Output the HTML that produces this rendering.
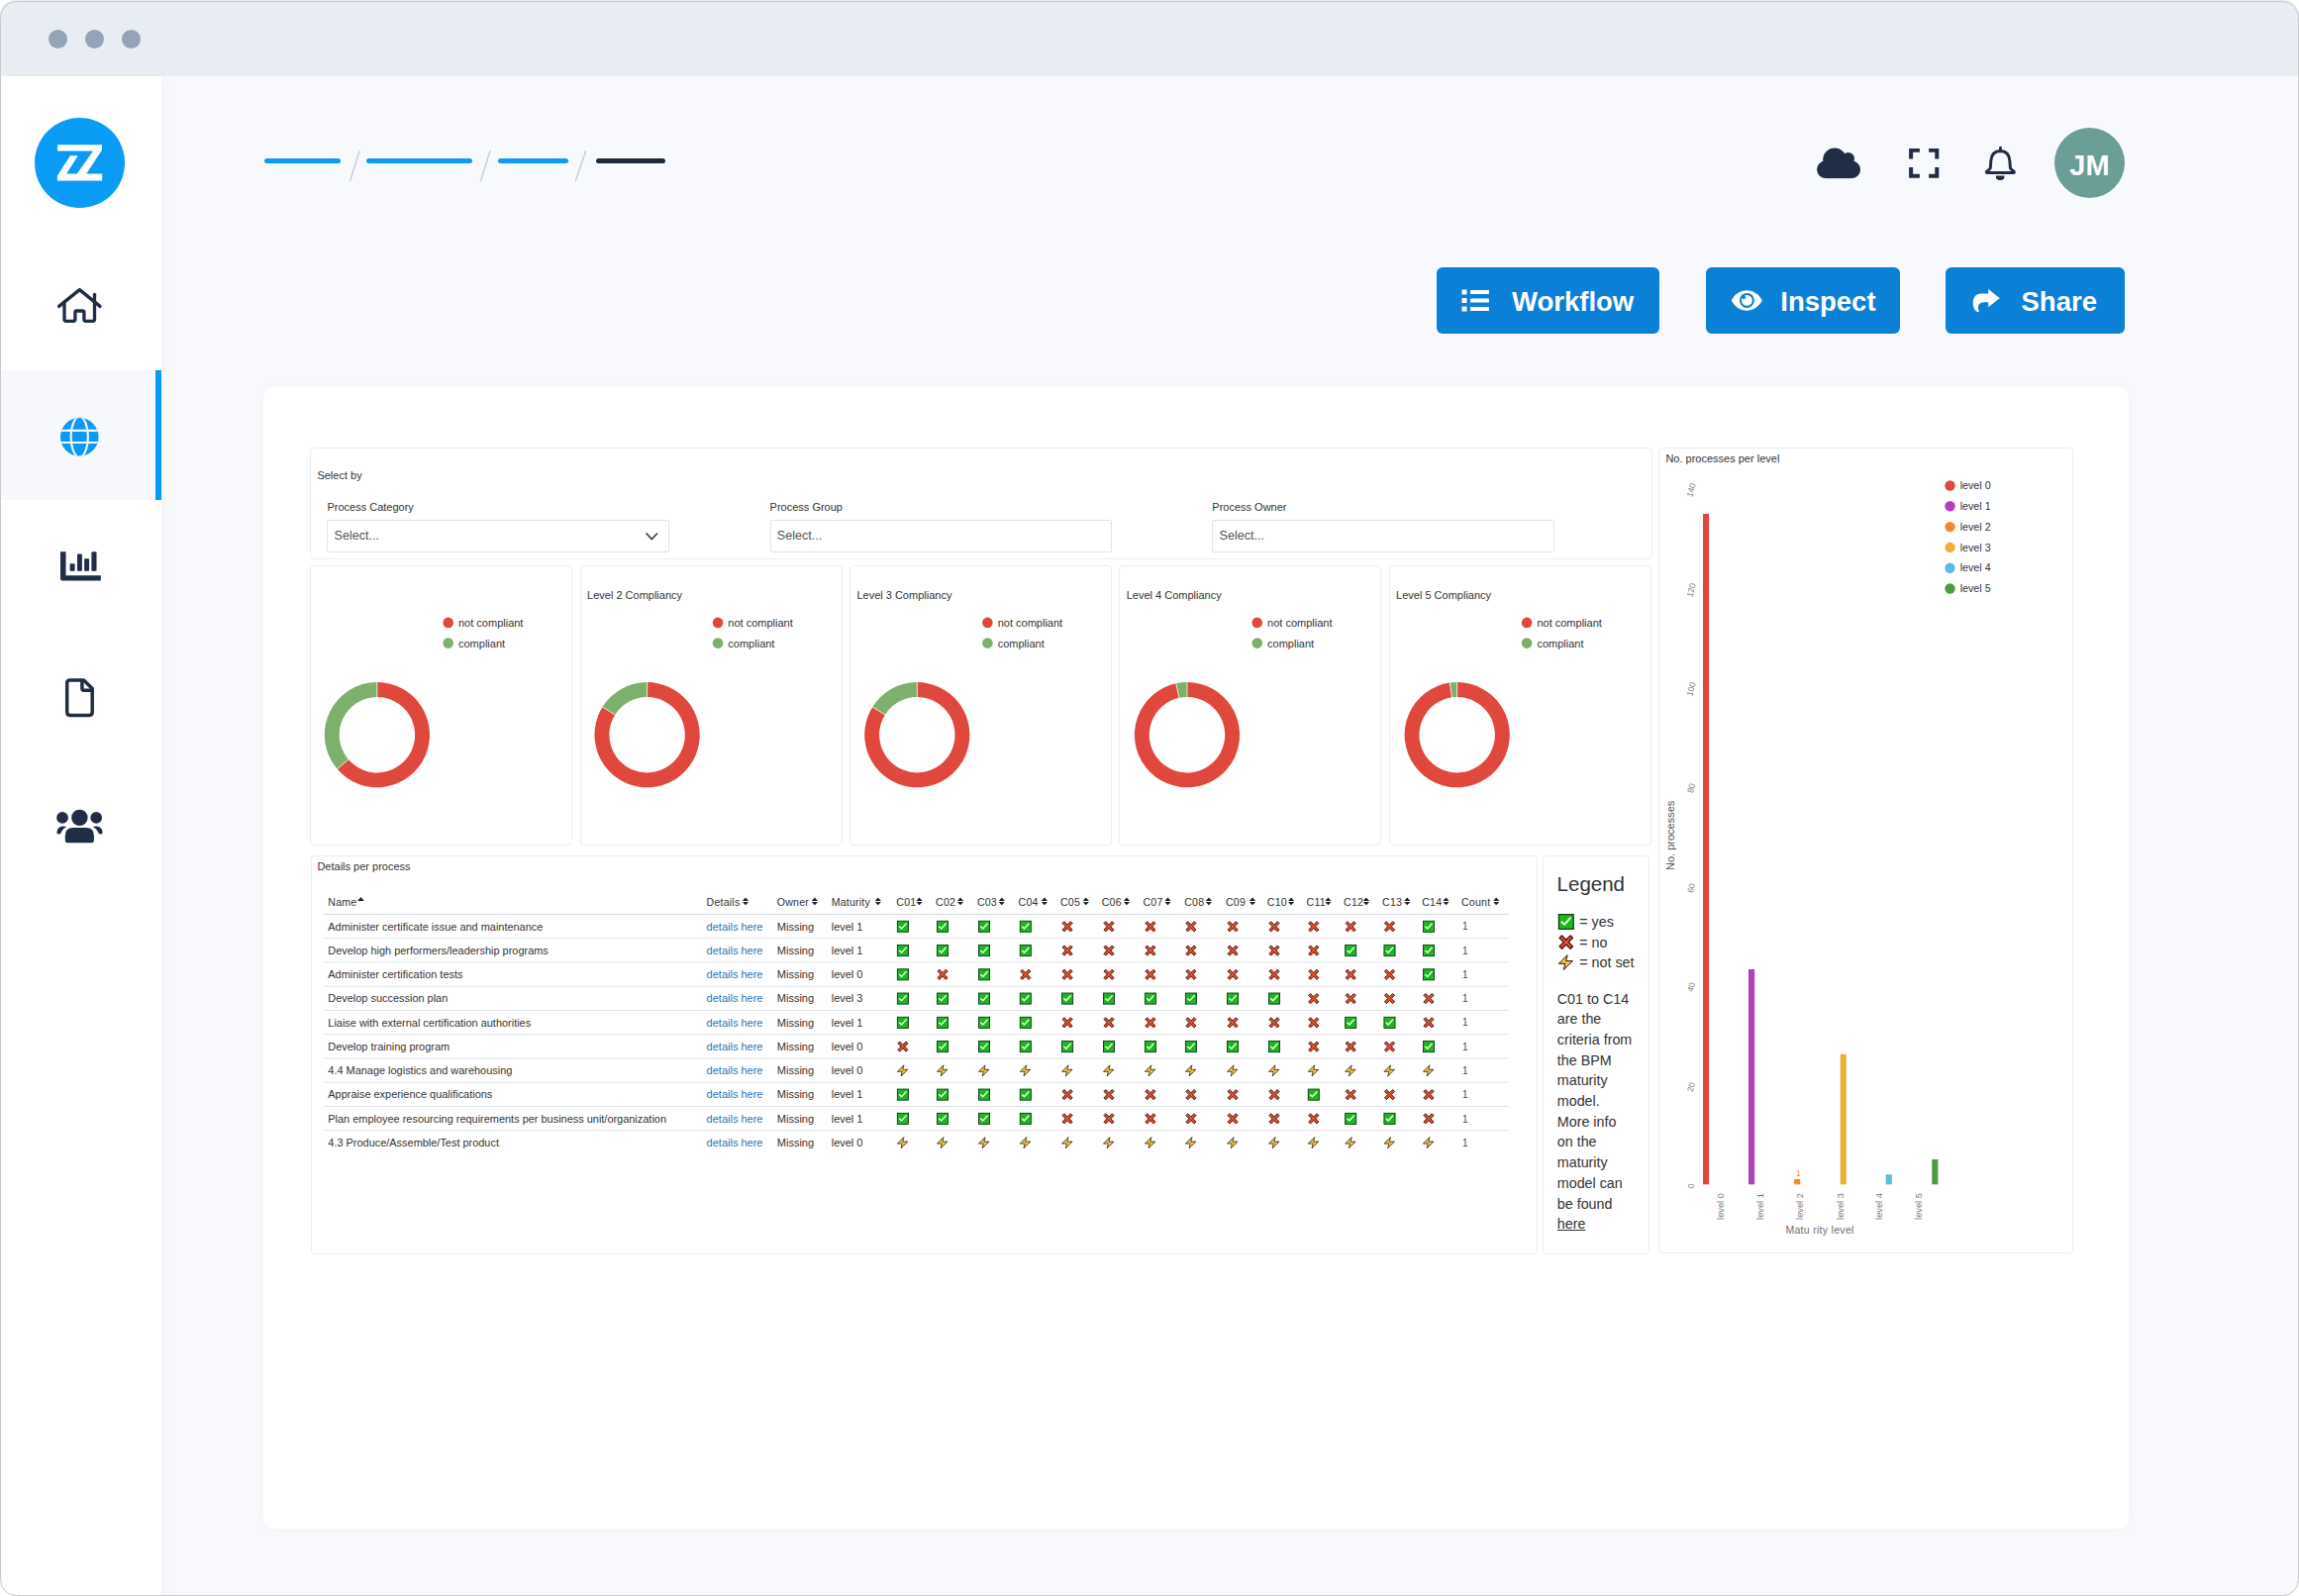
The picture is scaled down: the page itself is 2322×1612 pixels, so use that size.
<!DOCTYPE html>
<html><head><meta charset="utf-8"><title>Dashboard</title><style>
*{margin:0;padding:0;box-sizing:border-box}
html,body{width:2322px;height:1612px;overflow:hidden;background:#ffffff;font-family:"Liberation Sans", sans-serif}
.a{position:absolute}
.t{position:absolute;white-space:nowrap;line-height:1;font-family:"Liberation Sans", sans-serif}
svg{position:absolute;overflow:visible}
</style></head>
<body>
<div class="a" style="left:0;top:0;width:2322px;height:1612px;border-radius:16px;overflow:hidden;background:#f8f9fc"><div class="a" style="left:0.00px;top:0.00px;width:2322.00px;height:77.00px;background:#e8edf3"></div><div class="a" style="left:48.50px;top:29.80px;width:19.00px;height:19.00px;border-radius:50%;background:#94a3b8"></div><div class="a" style="left:85.90px;top:29.80px;width:19.00px;height:19.00px;border-radius:50%;background:#94a3b8"></div><div class="a" style="left:123.30px;top:29.80px;width:19.00px;height:19.00px;border-radius:50%;background:#94a3b8"></div><div class="a" style="left:0.00px;top:77.00px;width:163.00px;height:1540.00px;background:#ffffff;box-shadow:3px 0 10px rgba(30,40,60,0.025)"></div><div class="a" style="left:0.00px;top:374.00px;width:163.00px;height:130.50px;background:#f6f8fc"></div><div class="a" style="left:157.00px;top:374.00px;width:6.00px;height:130.50px;background:#0a9af5"></div><div class="a" style="left:35.00px;top:119.30px;width:91.00px;height:91.00px;border-radius:50%;background:#0a9cf5"></div><svg style="left:35px;top:119.3px" width="91" height="91" viewBox="0 0 91 91">
<path fill="#fff" d="M23.08 27.35 H68.0 V32.6 L52.2 56.5 H68.2 V63.4 H22.9 V58.6 L35.9 38.3 H43.76 L32.1 56.5 H42.8 L59.0 33.56 H23.08 Z"/>
</svg><svg style="left:0;top:0" width="163" height="900" viewBox="0 0 163 900">
<g fill="none" stroke="#1f2d45" stroke-width="3.3" stroke-linecap="round" stroke-linejoin="round">
<path d="M59.6 309.4 L80.4 292.6 L101 309.4"/>
<path d="M95.5 297.3 V304.5"/>
<path d="M65 305.5 V322.5 Q65 324.3 66.8 324.3 H74.2 Q75.9 324.3 75.9 322.5 V315.6 Q75.9 314 77.5 314 H83.3 Q84.9 314 84.9 315.6 V322.5 Q84.9 324.3 86.7 324.3 H93.7 Q95.5 324.3 95.5 322.5 V305"/>
</g>
<path fill="#1f2d45" d="M59 576.5 V557.2 H64.5 V581.2 H99.8 V586.4 H61 Q59 586.4 59 584.4Z" transform="translate(2 0)"/>
<rect x="70.6" y="569.2" width="5" height="7.6" rx="0.8" fill="#1f2d45"/>
<rect x="78" y="559.4" width="4.9" height="17.4" rx="0.8" fill="#1f2d45"/>
<rect x="85.1" y="564.2" width="4.9" height="12.6" rx="0.8" fill="#1f2d45"/>
<rect x="92.4" y="557.3" width="5.1" height="19.5" rx="0.8" fill="#1f2d45"/>
<g fill="none" stroke="#1f2d45" stroke-width="3.5" stroke-linejoin="round">
<path d="M84.6 686.9 H70.8 Q67.7 686.9 67.7 690 V719.3 Q67.7 722.4 70.8 722.4 H90.1 Q93.2 722.4 93.2 719.3 V695.5 Z"/>
<path d="M82.9 687.3 V695.3 Q82.9 697.3 84.9 697.3 H93"/>
</g>
<g fill="#1f2d45">
<circle cx="63" cy="825.9" r="5.9"/>
<circle cx="80.4" cy="825.9" r="8.2"/>
<circle cx="97.2" cy="825.9" r="5.9"/>
<path d="M65.8 849 V844 Q65.8 836.1 73.7 836.1 H87 Q94.9 836.1 94.9 844 V849 Q94.9 851.3 92.6 851.3 H68.1 Q65.8 851.3 65.8 849 Z"/>
<path d="M57.5 841.8 Q57 836 62 834.7 Q65 834 67.2 835.3 Q63 837 61.5 841.6 Q59.5 843.5 57.5 841.8Z"/>
<path d="M103.5 841.8 Q104 836 99 834.7 Q96 834 93.8 835.3 Q98 837 99.5 841.6 Q101.5 843.5 103.5 841.8Z"/>
</g>
</svg><svg style="left:61px;top:421.5px" width="38.5" height="38.7" viewBox="0 0 38.5 38.7">
<defs><clipPath id="gc"><ellipse cx="19.25" cy="19.35" rx="19.25" ry="19.35"/></clipPath></defs>
<ellipse cx="19.25" cy="19.35" rx="19.25" ry="19.35" fill="#0a9af5"/>
<g clip-path="url(#gc)" fill="none" stroke="#f6f8fc" stroke-width="2.1">
<line x1="-2" y1="12.9" x2="41" y2="12.9"/>
<line x1="-2" y1="25" x2="41" y2="25"/>
<ellipse cx="19.25" cy="19.35" rx="8.6" ry="20.3"/>
</g>
</svg><div class="a" style="left:267.00px;top:160.00px;width:77.00px;height:4.90px;border-radius:2.5px;background:#0e9cf0"></div><div class="a" style="left:370.40px;top:160.00px;width:106.60px;height:4.90px;border-radius:2.5px;background:#0e9cf0"></div><div class="a" style="left:502.90px;top:160.00px;width:71.10px;height:4.90px;border-radius:2.5px;background:#0e9cf0"></div><div class="a" style="left:601.70px;top:160.00px;width:70.10px;height:4.90px;border-radius:2.5px;background:#1e2a3b"></div><svg style="left:0;top:0" width="700" height="200" viewBox="0 0 700 200"><g stroke="#c5ccd4" stroke-width="1.4" stroke-linecap="round"><line x1="363.1" y1="152.5" x2="353.7" y2="182.5"/><line x1="495" y1="152.5" x2="485.5" y2="182.5"/><line x1="591.6" y1="152.5" x2="581.4" y2="182.5"/></g></svg><svg style="left:1820px;top:130px" width="240" height="80" viewBox="0 0 240 80">
<g fill="#1f2d45">
<circle cx="33" cy="31.3" r="11.8"/>
<circle cx="46.6" cy="30.3" r="6.4"/>
<circle cx="24" cy="41.2" r="8.9"/>
<circle cx="50.1" cy="41.2" r="8.9"/>
<rect x="24" y="32.3" width="26.1" height="17.8"/>
</g>
<g fill="#1f2d45">
<path d="M108.1 19.9 H118.9 V23.8 H112.1 V30.4 H108.1Z"/>
<path d="M138.3 19.9 H128.1 V23.8 H134.3 V30.4 H138.3Z"/>
<path d="M108.1 49.75 H118.9 V45.85 H112.1 V39.1 H108.1Z"/>
<path d="M138.3 49.75 H128.1 V45.85 H134.3 V39.1 H138.3Z"/>
</g>
<g fill="none" stroke="#1f2d45" stroke-width="3" stroke-linejoin="round">
<path d="M200.35 22.6 Q191.6 22.8 190.8 32.5 Q190.5 38 190.2 40 Q188.9 41.4 187 43 Q185.4 44.3 187.7 44.5 H213 Q215.3 44.3 213.7 43 Q211.8 41.4 210.5 40 Q210.2 38 209.9 32.5 Q209.1 22.8 200.35 22.6Z"/>
</g>
<rect x="199.1" y="17.8" width="2.8" height="5" rx="1.4" fill="#1f2d45"/>
<path d="M195.8 47.4 H204.6 Q204.6 52 200.2 52 Q195.8 52 195.8 47.4Z" fill="#1f2d45"/>
</svg><div class="a" style="left:2074.70px;top:128.80px;width:71.60px;height:71.60px;border-radius:50%;background:#6a9e97"></div><div class="t" style="left:2090.30px;top:152.75px;font-size:29px;color:#ffffff;font-weight:bold;">JM</div><div class="a" style="left:1451.30px;top:270.00px;width:224.70px;height:66.50px;border-radius:6px;background:#0a80d6"></div><div class="a" style="left:1723.00px;top:270.00px;width:196.00px;height:66.50px;border-radius:6px;background:#0a80d6"></div><div class="a" style="left:1964.60px;top:270.00px;width:181.70px;height:66.50px;border-radius:6px;background:#0a80d6"></div><div class="t" style="left:1527.00px;top:290.72px;font-size:27.5px;color:#fff;font-weight:bold;">Workflow</div><div class="t" style="left:1798.30px;top:290.72px;font-size:27.5px;color:#fff;font-weight:bold;">Inspect</div><div class="t" style="left:2041.50px;top:290.72px;font-size:27.5px;color:#fff;font-weight:bold;">Share</div><svg style="left:1440px;top:250px" width="700" height="100" viewBox="0 0 700 100">
<g fill="#fff">
<rect x="36.5" y="42.4" width="5" height="5" rx="0.6"/>
<rect x="36.5" y="51" width="5" height="5" rx="0.6"/>
<rect x="36.5" y="59.6" width="5" height="5" rx="0.6"/>
<rect x="45" y="42.9" width="19" height="4" rx="0.6"/>
<rect x="45" y="51.5" width="19" height="4" rx="0.6"/>
<rect x="45" y="60.1" width="19" height="4" rx="0.6"/>
</g>
<path fill="#fff" d="M308.7 53.5 C312 47 318 43.3 324.2 43.3 C330.4 43.3 336.5 47 339.8 53.5 C336.5 60 330.4 63.8 324.2 63.8 C318 63.8 312 60 308.7 53.5Z"/>
<circle cx="324.4" cy="53.4" r="6.45" fill="#fff" stroke="#0a80d6" stroke-width="2.1"/>
<circle cx="321.3" cy="50.5" r="1.75" fill="#0a80d6"/>
<path fill="#fff" d="M579.8 51.2 L568.2 42 V46.6 H561 C555.5 46.6 552.7 50.5 552.7 56.5 C552.7 61 555 64.2 557.6 65.2 C558.6 65.4 559 64.6 558.6 63.6 C557.6 61.4 557.6 58.8 559 57.2 C560.4 55.6 562.5 55.2 565 55.2 H568.2 V60.3 Z"/>
</svg><div class="a" style="left:266.00px;top:391.00px;width:1884.00px;height:1153.20px;border-radius:9px;background:#ffffff;box-shadow:0 0 6px rgba(30,40,60,0.035)"></div><div class="a" style="left:313.00px;top:452.00px;width:1355.50px;height:113.20px;border:1px solid #ededee;border-radius:4px;background:#fff"></div><div class="t" style="left:320.40px;top:475.09px;font-size:11px;color:#333;font-weight:normal;">Select by</div><div class="t" style="left:330.40px;top:507.49px;font-size:11px;color:#333;font-weight:normal;">Process Category</div><div class="a" style="left:330.40px;top:524.50px;width:345.30px;height:33.40px;border:1px solid #e3e3e3;border-radius:2px;background:#fff"></div><div class="t" style="left:337.60px;top:535.13px;font-size:12.6px;color:#555;font-weight:normal;">Select...</div><div class="t" style="left:777.60px;top:507.49px;font-size:11px;color:#333;font-weight:normal;">Process Group</div><div class="a" style="left:777.60px;top:524.50px;width:345.30px;height:33.40px;border:1px solid #e3e3e3;border-radius:2px;background:#fff"></div><div class="t" style="left:784.80px;top:535.13px;font-size:12.6px;color:#555;font-weight:normal;">Select...</div><div class="t" style="left:1224.30px;top:507.49px;font-size:11px;color:#333;font-weight:normal;">Process Owner</div><div class="a" style="left:1224.30px;top:524.50px;width:345.30px;height:33.40px;border:1px solid #e3e3e3;border-radius:2px;background:#fff"></div><div class="t" style="left:1231.50px;top:535.13px;font-size:12.6px;color:#555;font-weight:normal;">Select...</div><svg style="left:0;top:0" width="700" height="600" viewBox="0 0 700 600"><path d="M652.6 538.4 L658.3 544.6 L664 538.4" fill="none" stroke="#333" stroke-width="1.5"/></svg><div class="a" style="left:313.20px;top:571.40px;width:265.00px;height:282.50px;border:1px solid #ededee;border-radius:4px;background:#fff"></div><div class="t" style="left:463.00px;top:623.89px;font-size:11px;color:#333;font-weight:normal;">not compliant</div><div class="t" style="left:463.00px;top:644.59px;font-size:11px;color:#333;font-weight:normal;">compliant</div><div class="a" style="left:585.55px;top:571.40px;width:265.00px;height:282.50px;border:1px solid #ededee;border-radius:4px;background:#fff"></div><div class="t" style="left:593.05px;top:596.39px;font-size:11px;color:#333;font-weight:normal;">Level 2 Compliancy</div><div class="t" style="left:735.35px;top:623.89px;font-size:11px;color:#333;font-weight:normal;">not compliant</div><div class="t" style="left:735.35px;top:644.59px;font-size:11px;color:#333;font-weight:normal;">compliant</div><div class="a" style="left:857.90px;top:571.40px;width:265.00px;height:282.50px;border:1px solid #ededee;border-radius:4px;background:#fff"></div><div class="t" style="left:865.40px;top:596.39px;font-size:11px;color:#333;font-weight:normal;">Level 3 Compliancy</div><div class="t" style="left:1007.70px;top:623.89px;font-size:11px;color:#333;font-weight:normal;">not compliant</div><div class="t" style="left:1007.70px;top:644.59px;font-size:11px;color:#333;font-weight:normal;">compliant</div><div class="a" style="left:1130.25px;top:571.40px;width:265.00px;height:282.50px;border:1px solid #ededee;border-radius:4px;background:#fff"></div><div class="t" style="left:1137.75px;top:596.39px;font-size:11px;color:#333;font-weight:normal;">Level 4 Compliancy</div><div class="t" style="left:1280.05px;top:623.89px;font-size:11px;color:#333;font-weight:normal;">not compliant</div><div class="t" style="left:1280.05px;top:644.59px;font-size:11px;color:#333;font-weight:normal;">compliant</div><div class="a" style="left:1402.60px;top:571.40px;width:265.00px;height:282.50px;border:1px solid #ededee;border-radius:4px;background:#fff"></div><div class="t" style="left:1410.10px;top:596.39px;font-size:11px;color:#333;font-weight:normal;">Level 5 Compliancy</div><div class="t" style="left:1552.40px;top:623.89px;font-size:11px;color:#333;font-weight:normal;">not compliant</div><div class="t" style="left:1552.40px;top:644.59px;font-size:11px;color:#333;font-weight:normal;">compliant</div><svg style="left:0;top:0" width="1700" height="900" viewBox="0 0 1700 900"><path d="M380.90 689.10 A53.1 53.1 0 1 1 340.64 776.83 L351.94 767.11 A38.2 38.2 0 1 0 380.90 704.00 Z" fill="#e0483e"/><path d="M340.64 776.83 A53.1 53.1 0 0 1 380.90 689.10 L380.90 704.00 A38.2 38.2 0 0 0 351.94 767.11 Z" fill="#7db06c"/><line x1="380.9" y1="688.7" x2="380.9" y2="704.4000000000001" stroke="#fff8ee" stroke-width="0.8"/><line x1="352.24" y1="766.85" x2="340.34" y2="777.09" stroke="#fff8ee" stroke-width="0.8"/><circle cx="452.70" cy="628.9" r="5.3" fill="#e0483e"/><circle cx="452.70" cy="649.6" r="5.3" fill="#7db06c"/><path d="M653.60 689.10 A53.1 53.1 0 1 1 608.57 714.06 L621.20 721.96 A38.2 38.2 0 1 0 653.60 704.00 Z" fill="#e0483e"/><path d="M608.57 714.06 A53.1 53.1 0 0 1 653.60 689.10 L653.60 704.00 A38.2 38.2 0 0 0 621.20 721.96 Z" fill="#7db06c"/><line x1="653.5999999999999" y1="688.7" x2="653.5999999999999" y2="704.4000000000001" stroke="#fff8ee" stroke-width="0.8"/><line x1="621.54" y1="722.17" x2="608.23" y2="713.85" stroke="#fff8ee" stroke-width="0.8"/><circle cx="725.05" cy="628.9" r="5.3" fill="#e0483e"/><circle cx="725.05" cy="649.6" r="5.3" fill="#7db06c"/><path d="M926.30 689.10 A53.1 53.1 0 1 1 881.27 714.06 L893.90 721.96 A38.2 38.2 0 1 0 926.30 704.00 Z" fill="#e0483e"/><path d="M881.27 714.06 A53.1 53.1 0 0 1 926.30 689.10 L926.30 704.00 A38.2 38.2 0 0 0 893.90 721.96 Z" fill="#7db06c"/><line x1="926.3" y1="688.7" x2="926.3" y2="704.4000000000001" stroke="#fff8ee" stroke-width="0.8"/><line x1="894.24" y1="722.17" x2="880.93" y2="713.85" stroke="#fff8ee" stroke-width="0.8"/><circle cx="997.40" cy="628.9" r="5.3" fill="#e0483e"/><circle cx="997.40" cy="649.6" r="5.3" fill="#7db06c"/><path d="M1199.00 689.10 A53.1 53.1 0 1 1 1187.78 690.30 L1190.93 704.86 A38.2 38.2 0 1 0 1199.00 704.00 Z" fill="#e0483e"/><path d="M1187.78 690.30 A53.1 53.1 0 0 1 1199.00 689.10 L1199.00 704.00 A38.2 38.2 0 0 0 1190.93 704.86 Z" fill="#7db06c"/><line x1="1199.0" y1="688.7" x2="1199.0" y2="704.4000000000001" stroke="#fff8ee" stroke-width="0.8"/><line x1="1191.01" y1="705.25" x2="1187.69" y2="689.91" stroke="#fff8ee" stroke-width="0.8"/><circle cx="1269.75" cy="628.9" r="5.3" fill="#e0483e"/><circle cx="1269.75" cy="649.6" r="5.3" fill="#7db06c"/><path d="M1471.70 689.10 A53.1 53.1 0 1 1 1464.31 689.62 L1466.38 704.37 A38.2 38.2 0 1 0 1471.70 704.00 Z" fill="#e0483e"/><path d="M1464.31 689.62 A53.1 53.1 0 0 1 1471.70 689.10 L1471.70 704.00 A38.2 38.2 0 0 0 1466.38 704.37 Z" fill="#7db06c"/><line x1="1471.6999999999998" y1="688.7" x2="1471.6999999999998" y2="704.4000000000001" stroke="#fff8ee" stroke-width="0.8"/><line x1="1466.44" y1="704.77" x2="1464.25" y2="689.22" stroke="#fff8ee" stroke-width="0.8"/><circle cx="1542.10" cy="628.9" r="5.3" fill="#e0483e"/><circle cx="1542.10" cy="649.6" r="5.3" fill="#7db06c"/></svg><div class="a" style="left:1674.50px;top:452.40px;width:419.70px;height:813.60px;border:1px solid #ededee;border-radius:4px;background:#fff"></div><div class="t" style="left:1682.40px;top:458.09px;font-size:11px;color:#333;font-weight:normal;">No. processes per level</div><div class="t" style="left:1979.70px;top:485.24px;font-size:10.7px;color:#333;font-weight:normal;">level 0</div><div class="t" style="left:1979.70px;top:506.04px;font-size:10.7px;color:#333;font-weight:normal;">level 1</div><div class="t" style="left:1979.70px;top:526.84px;font-size:10.7px;color:#333;font-weight:normal;">level 2</div><div class="t" style="left:1979.70px;top:547.64px;font-size:10.7px;color:#333;font-weight:normal;">level 3</div><div class="t" style="left:1979.70px;top:568.44px;font-size:10.7px;color:#333;font-weight:normal;">level 4</div><div class="t" style="left:1979.70px;top:589.24px;font-size:10.7px;color:#333;font-weight:normal;">level 5</div><svg style="left:0;top:0" width="2100" height="1300" viewBox="0 0 2100 1300"><rect x="1720" y="519.00" width="6.1" height="677.30" fill="#e0483e"/><circle cx="1969.5" cy="490.50" r="5.2" fill="#e0483e"/><rect x="1766" y="979.00" width="6.1" height="217.30" fill="#b340bb"/><circle cx="1969.5" cy="511.30" r="5.2" fill="#b340bb"/><rect x="1812.1" y="1191.00" width="6.1" height="5.30" fill="#ef8a34"/><circle cx="1969.5" cy="532.10" r="5.2" fill="#ef8a34"/><rect x="1858.7" y="1064.70" width="6.1" height="131.60" fill="#ebb134"/><circle cx="1969.5" cy="552.90" r="5.2" fill="#ebb134"/><rect x="1904.7" y="1186.30" width="6.1" height="10.00" fill="#5bbde0"/><circle cx="1969.5" cy="573.70" r="5.2" fill="#5bbde0"/><rect x="1951.3" y="1171.00" width="6.1" height="25.30" fill="#4f9a41"/><circle cx="1969.5" cy="594.50" r="5.2" fill="#4f9a41"/></svg><div class="t" style="left:1692.5px;top:1193.0px;width:30px;height:10px;text-align:center;font-size:8.5px;line-height:10px;color:#808080;transform:rotate(-76deg)">0</div><div class="t" style="left:1692.5px;top:1092.6px;width:30px;height:10px;text-align:center;font-size:8.5px;line-height:10px;color:#808080;transform:rotate(-76deg)">20</div><div class="t" style="left:1692.5px;top:992.2px;width:30px;height:10px;text-align:center;font-size:8.5px;line-height:10px;color:#808080;transform:rotate(-76deg)">40</div><div class="t" style="left:1692.5px;top:891.8px;width:30px;height:10px;text-align:center;font-size:8.5px;line-height:10px;color:#808080;transform:rotate(-76deg)">60</div><div class="t" style="left:1692.5px;top:791.4px;width:30px;height:10px;text-align:center;font-size:8.5px;line-height:10px;color:#808080;transform:rotate(-76deg)">80</div><div class="t" style="left:1692.5px;top:691.0px;width:30px;height:10px;text-align:center;font-size:8.5px;line-height:10px;color:#808080;transform:rotate(-76deg)">100</div><div class="t" style="left:1692.5px;top:590.6px;width:30px;height:10px;text-align:center;font-size:8.5px;line-height:10px;color:#808080;transform:rotate(-76deg)">120</div><div class="t" style="left:1692.5px;top:490.2px;width:30px;height:10px;text-align:center;font-size:8.5px;line-height:10px;color:#808080;transform:rotate(-76deg)">140</div><div class="t" style="left:1707.6px;top:1212.7px;width:60px;height:11px;text-align:center;font-size:9.3px;line-height:11px;color:#7a7a7a;transform:rotate(-90deg)">level 0</div><div class="t" style="left:1747.6px;top:1212.7px;width:60px;height:11px;text-align:center;font-size:9.3px;line-height:11px;color:#7a7a7a;transform:rotate(-90deg)">level 1</div><div class="t" style="left:1788.0px;top:1212.7px;width:60px;height:11px;text-align:center;font-size:9.3px;line-height:11px;color:#7a7a7a;transform:rotate(-90deg)">level 2</div><div class="t" style="left:1828.7px;top:1212.7px;width:60px;height:11px;text-align:center;font-size:9.3px;line-height:11px;color:#7a7a7a;transform:rotate(-90deg)">level 3</div><div class="t" style="left:1868.0px;top:1212.7px;width:60px;height:11px;text-align:center;font-size:9.3px;line-height:11px;color:#7a7a7a;transform:rotate(-90deg)">level 4</div><div class="t" style="left:1908.4px;top:1212.7px;width:60px;height:11px;text-align:center;font-size:9.3px;line-height:11px;color:#7a7a7a;transform:rotate(-90deg)">level 5</div><div class="t" style="left:1814.10px;top:1181.18px;font-size:9px;color:#ef8a34;font-weight:normal;">1</div><div class="t" style="left:1803.40px;top:1236.91px;font-size:10.5px;color:#6e6e6e;font-weight:normal;letter-spacing:0.3px">Matu rity  level</div><div class="t" style="left:1652px;top:837.5px;width:70px;height:12px;text-align:center;font-size:11px;line-height:12px;color:#555;transform:rotate(-90deg)">No. processes</div><div class="a" style="left:313.60px;top:864.40px;width:1239.10px;height:403.10px;border:1px solid #ededee;border-radius:4px;background:#fff"></div><div class="t" style="left:320.40px;top:870.29px;font-size:11px;color:#333;font-weight:normal;">Details per process</div><div class="t" style="left:331.30px;top:906.33px;font-size:10.6px;color:#333;font-weight:normal;letter-spacing:0.2px">Name</div><div class="t" style="left:713.60px;top:906.33px;font-size:10.6px;color:#333;font-weight:normal;letter-spacing:0.2px">Details</div><div class="t" style="left:784.80px;top:906.33px;font-size:10.6px;color:#333;font-weight:normal;letter-spacing:0.2px">Owner</div><div class="t" style="left:839.70px;top:906.33px;font-size:10.6px;color:#333;font-weight:normal;letter-spacing:0.2px">Maturity</div><div class="t" style="left:905.30px;top:906.33px;font-size:10.6px;color:#333;font-weight:normal;letter-spacing:0.2px">C01</div><div class="t" style="left:945.10px;top:906.33px;font-size:10.6px;color:#333;font-weight:normal;letter-spacing:0.2px">C02</div><div class="t" style="left:986.90px;top:906.33px;font-size:10.6px;color:#333;font-weight:normal;letter-spacing:0.2px">C03</div><div class="t" style="left:1028.60px;top:906.33px;font-size:10.6px;color:#333;font-weight:normal;letter-spacing:0.2px">C04</div><div class="t" style="left:1071.00px;top:906.33px;font-size:10.6px;color:#333;font-weight:normal;letter-spacing:0.2px">C05</div><div class="t" style="left:1112.70px;top:906.33px;font-size:10.6px;color:#333;font-weight:normal;letter-spacing:0.2px">C06</div><div class="t" style="left:1154.50px;top:906.33px;font-size:10.6px;color:#333;font-weight:normal;letter-spacing:0.2px">C07</div><div class="t" style="left:1196.20px;top:906.33px;font-size:10.6px;color:#333;font-weight:normal;letter-spacing:0.2px">C08</div><div class="t" style="left:1238.00px;top:906.33px;font-size:10.6px;color:#333;font-weight:normal;letter-spacing:0.2px">C09</div><div class="t" style="left:1279.80px;top:906.33px;font-size:10.6px;color:#333;font-weight:normal;letter-spacing:0.2px">C10</div><div class="t" style="left:1319.60px;top:906.33px;font-size:10.6px;color:#333;font-weight:normal;letter-spacing:0.2px">C11</div><div class="t" style="left:1357.10px;top:906.33px;font-size:10.6px;color:#333;font-weight:normal;letter-spacing:0.2px">C12</div><div class="t" style="left:1396.10px;top:906.33px;font-size:10.6px;color:#333;font-weight:normal;letter-spacing:0.2px">C13</div><div class="t" style="left:1436.20px;top:906.33px;font-size:10.6px;color:#333;font-weight:normal;letter-spacing:0.2px">C14</div><div class="t" style="left:1476.00px;top:906.33px;font-size:10.6px;color:#333;font-weight:normal;letter-spacing:0.2px">Count</div><svg style="left:0;top:0" width="1600" height="1000" viewBox="0 0 1600 1000"><path fill="#222" d="M361.1 909.9 L364.45 906 L367.8 909.9Z"/><path fill="#222" d="M749.90 909.9 L753.00 906.6 L756.10 909.9Z M749.90 911 L756.10 911 L753.00 914.2Z"/><path fill="#222" d="M819.80 909.9 L822.90 906.6 L826.00 909.9Z M819.80 911 L826.00 911 L822.90 914.2Z"/><path fill="#222" d="M883.70 909.9 L886.80 906.6 L889.90 909.9Z M883.70 911 L889.90 911 L886.80 914.2Z"/><path fill="#222" d="M925.40 909.9 L928.50 906.6 L931.60 909.9Z M925.40 911 L931.60 911 L928.50 914.2Z"/><path fill="#222" d="M966.90 909.9 L970.00 906.6 L973.10 909.9Z M966.90 911 L973.10 911 L970.00 914.2Z"/><path fill="#222" d="M1008.70 909.9 L1011.80 906.6 L1014.90 909.9Z M1008.70 911 L1014.90 911 L1011.80 914.2Z"/><path fill="#222" d="M1051.80 909.9 L1054.90 906.6 L1058.00 909.9Z M1051.80 911 L1058.00 911 L1054.90 914.2Z"/><path fill="#222" d="M1093.70 909.9 L1096.80 906.6 L1099.90 909.9Z M1093.70 911 L1099.90 911 L1096.80 914.2Z"/><path fill="#222" d="M1134.90 909.9 L1138.00 906.6 L1141.10 909.9Z M1134.90 911 L1141.10 911 L1138.00 914.2Z"/><path fill="#222" d="M1176.40 909.9 L1179.50 906.6 L1182.60 909.9Z M1176.40 911 L1182.60 911 L1179.50 914.2Z"/><path fill="#222" d="M1217.80 909.9 L1220.90 906.6 L1224.00 909.9Z M1217.80 911 L1224.00 911 L1220.90 914.2Z"/><path fill="#222" d="M1261.90 909.9 L1265.00 906.6 L1268.10 909.9Z M1261.90 911 L1268.10 911 L1265.00 914.2Z"/><path fill="#222" d="M1301.00 909.9 L1304.10 906.6 L1307.20 909.9Z M1301.00 911 L1307.20 911 L1304.10 914.2Z"/><path fill="#222" d="M1338.30 909.9 L1341.40 906.6 L1344.50 909.9Z M1338.30 911 L1344.50 911 L1341.40 914.2Z"/><path fill="#222" d="M1376.80 909.9 L1379.90 906.6 L1383.00 909.9Z M1376.80 911 L1383.00 911 L1379.90 914.2Z"/><path fill="#222" d="M1418.20 909.9 L1421.30 906.6 L1424.40 909.9Z M1418.20 911 L1424.40 911 L1421.30 914.2Z"/><path fill="#222" d="M1457.40 909.9 L1460.50 906.6 L1463.60 909.9Z M1457.40 911 L1463.60 911 L1460.50 914.2Z"/><path fill="#222" d="M1508.10 909.9 L1511.20 906.6 L1514.30 909.9Z M1508.10 911 L1514.30 911 L1511.20 914.2Z"/></svg><div class="t" style="left:331.30px;top:930.63px;font-size:10.95px;color:#333;font-weight:normal;">Administer certificate issue and maintenance</div><div class="t" style="left:713.60px;top:930.59px;font-size:11px;color:#2b74b0;font-weight:normal;">details here</div><div class="t" style="left:784.80px;top:930.59px;font-size:11px;color:#333;font-weight:normal;">Missing</div><div class="t" style="left:839.70px;top:930.59px;font-size:11px;color:#333;font-weight:normal;">level 1</div><div class="t" style="left:1477.00px;top:931.43px;font-size:10px;color:#4a4a4a;font-weight:normal;">1</div><div class="t" style="left:331.30px;top:954.89px;font-size:10.95px;color:#333;font-weight:normal;">Develop high performers/leadership programs</div><div class="t" style="left:713.60px;top:954.85px;font-size:11px;color:#2b74b0;font-weight:normal;">details here</div><div class="t" style="left:784.80px;top:954.85px;font-size:11px;color:#333;font-weight:normal;">Missing</div><div class="t" style="left:839.70px;top:954.85px;font-size:11px;color:#333;font-weight:normal;">level 1</div><div class="t" style="left:1477.00px;top:955.69px;font-size:10px;color:#4a4a4a;font-weight:normal;">1</div><div class="t" style="left:331.30px;top:979.15px;font-size:10.95px;color:#333;font-weight:normal;">Administer certification tests</div><div class="t" style="left:713.60px;top:979.11px;font-size:11px;color:#2b74b0;font-weight:normal;">details here</div><div class="t" style="left:784.80px;top:979.11px;font-size:11px;color:#333;font-weight:normal;">Missing</div><div class="t" style="left:839.70px;top:979.11px;font-size:11px;color:#333;font-weight:normal;">level 0</div><div class="t" style="left:1477.00px;top:979.95px;font-size:10px;color:#4a4a4a;font-weight:normal;">1</div><div class="t" style="left:331.30px;top:1003.41px;font-size:10.95px;color:#333;font-weight:normal;">Develop succession plan</div><div class="t" style="left:713.60px;top:1003.37px;font-size:11px;color:#2b74b0;font-weight:normal;">details here</div><div class="t" style="left:784.80px;top:1003.37px;font-size:11px;color:#333;font-weight:normal;">Missing</div><div class="t" style="left:839.70px;top:1003.37px;font-size:11px;color:#333;font-weight:normal;">level 3</div><div class="t" style="left:1477.00px;top:1004.21px;font-size:10px;color:#4a4a4a;font-weight:normal;">1</div><div class="t" style="left:331.30px;top:1027.67px;font-size:10.95px;color:#333;font-weight:normal;">Liaise with external certification authorities</div><div class="t" style="left:713.60px;top:1027.63px;font-size:11px;color:#2b74b0;font-weight:normal;">details here</div><div class="t" style="left:784.80px;top:1027.63px;font-size:11px;color:#333;font-weight:normal;">Missing</div><div class="t" style="left:839.70px;top:1027.63px;font-size:11px;color:#333;font-weight:normal;">level 1</div><div class="t" style="left:1477.00px;top:1028.48px;font-size:10px;color:#4a4a4a;font-weight:normal;">1</div><div class="t" style="left:331.30px;top:1051.93px;font-size:10.95px;color:#333;font-weight:normal;">Develop training program</div><div class="t" style="left:713.60px;top:1051.89px;font-size:11px;color:#2b74b0;font-weight:normal;">details here</div><div class="t" style="left:784.80px;top:1051.89px;font-size:11px;color:#333;font-weight:normal;">Missing</div><div class="t" style="left:839.70px;top:1051.89px;font-size:11px;color:#333;font-weight:normal;">level 0</div><div class="t" style="left:1477.00px;top:1052.74px;font-size:10px;color:#4a4a4a;font-weight:normal;">1</div><div class="t" style="left:331.30px;top:1076.19px;font-size:10.95px;color:#333;font-weight:normal;">4.4 Manage logistics and warehousing</div><div class="t" style="left:713.60px;top:1076.15px;font-size:11px;color:#2b74b0;font-weight:normal;">details here</div><div class="t" style="left:784.80px;top:1076.15px;font-size:11px;color:#333;font-weight:normal;">Missing</div><div class="t" style="left:839.70px;top:1076.15px;font-size:11px;color:#333;font-weight:normal;">level 0</div><div class="t" style="left:1477.00px;top:1077.00px;font-size:10px;color:#4a4a4a;font-weight:normal;">1</div><div class="t" style="left:331.30px;top:1100.45px;font-size:10.95px;color:#333;font-weight:normal;">Appraise experience qualifications</div><div class="t" style="left:713.60px;top:1100.41px;font-size:11px;color:#2b74b0;font-weight:normal;">details here</div><div class="t" style="left:784.80px;top:1100.41px;font-size:11px;color:#333;font-weight:normal;">Missing</div><div class="t" style="left:839.70px;top:1100.41px;font-size:11px;color:#333;font-weight:normal;">level 1</div><div class="t" style="left:1477.00px;top:1101.26px;font-size:10px;color:#4a4a4a;font-weight:normal;">1</div><div class="t" style="left:331.30px;top:1124.71px;font-size:10.95px;color:#333;font-weight:normal;">Plan employee resourcing requirements per business unit/organization</div><div class="t" style="left:713.60px;top:1124.67px;font-size:11px;color:#2b74b0;font-weight:normal;">details here</div><div class="t" style="left:784.80px;top:1124.67px;font-size:11px;color:#333;font-weight:normal;">Missing</div><div class="t" style="left:839.70px;top:1124.67px;font-size:11px;color:#333;font-weight:normal;">level 1</div><div class="t" style="left:1477.00px;top:1125.52px;font-size:10px;color:#4a4a4a;font-weight:normal;">1</div><div class="t" style="left:331.30px;top:1148.97px;font-size:10.95px;color:#333;font-weight:normal;">4.3 Produce/Assemble/Test product</div><div class="t" style="left:713.60px;top:1148.93px;font-size:11px;color:#2b74b0;font-weight:normal;">details here</div><div class="t" style="left:784.80px;top:1148.93px;font-size:11px;color:#333;font-weight:normal;">Missing</div><div class="t" style="left:839.70px;top:1148.93px;font-size:11px;color:#333;font-weight:normal;">level 0</div><div class="t" style="left:1477.00px;top:1149.78px;font-size:10px;color:#4a4a4a;font-weight:normal;">1</div><svg style="left:0;top:0" width="1600" height="1300" viewBox="0 0 1600 1300"><rect x="326.9" y="922.90" width="1197.1" height="1" fill="#d3d7da"/><rect x="326.9" y="947.16" width="1197.1" height="1" fill="#dfe2e5"/><g transform="translate(905.90 929.80) scale(0.7500)"><rect x="0.6" y="0.6" width="14.8" height="14.8" fill="#1fb51f" stroke="#0b3a0b" stroke-width="1.2"/><path d="M3.6 8.3 L6.3 10.9 L12.2 4.2" fill="none" stroke="#eaffea" stroke-width="1.9" stroke-linecap="round" stroke-linejoin="round"/></g><g transform="translate(946.00 929.80) scale(0.7500)"><rect x="0.6" y="0.6" width="14.8" height="14.8" fill="#1fb51f" stroke="#0b3a0b" stroke-width="1.2"/><path d="M3.6 8.3 L6.3 10.9 L12.2 4.2" fill="none" stroke="#eaffea" stroke-width="1.9" stroke-linecap="round" stroke-linejoin="round"/></g><g transform="translate(988.00 929.80) scale(0.7500)"><rect x="0.6" y="0.6" width="14.8" height="14.8" fill="#1fb51f" stroke="#0b3a0b" stroke-width="1.2"/><path d="M3.6 8.3 L6.3 10.9 L12.2 4.2" fill="none" stroke="#eaffea" stroke-width="1.9" stroke-linecap="round" stroke-linejoin="round"/></g><g transform="translate(1029.80 929.80) scale(0.7500)"><rect x="0.6" y="0.6" width="14.8" height="14.8" fill="#1fb51f" stroke="#0b3a0b" stroke-width="1.2"/><path d="M3.6 8.3 L6.3 10.9 L12.2 4.2" fill="none" stroke="#eaffea" stroke-width="1.9" stroke-linecap="round" stroke-linejoin="round"/></g><g transform="translate(1072.10 929.80) scale(0.7500)"><path d="M1.2 3.7 L3.7 1.2 L8 5.5 L12.3 1.2 L14.8 3.7 L10.5 8 L14.8 12.3 L12.3 14.8 L8 10.5 L3.7 14.8 L1.2 12.3 L5.5 8 Z" fill="#e04b2d" stroke="#2e0b06" stroke-width="1.15" stroke-linejoin="round"/></g><g transform="translate(1114.00 929.80) scale(0.7500)"><path d="M1.2 3.7 L3.7 1.2 L8 5.5 L12.3 1.2 L14.8 3.7 L10.5 8 L14.8 12.3 L12.3 14.8 L8 10.5 L3.7 14.8 L1.2 12.3 L5.5 8 Z" fill="#e04b2d" stroke="#2e0b06" stroke-width="1.15" stroke-linejoin="round"/></g><g transform="translate(1155.90 929.80) scale(0.7500)"><path d="M1.2 3.7 L3.7 1.2 L8 5.5 L12.3 1.2 L14.8 3.7 L10.5 8 L14.8 12.3 L12.3 14.8 L8 10.5 L3.7 14.8 L1.2 12.3 L5.5 8 Z" fill="#e04b2d" stroke="#2e0b06" stroke-width="1.15" stroke-linejoin="round"/></g><g transform="translate(1196.90 929.80) scale(0.7500)"><path d="M1.2 3.7 L3.7 1.2 L8 5.5 L12.3 1.2 L14.8 3.7 L10.5 8 L14.8 12.3 L12.3 14.8 L8 10.5 L3.7 14.8 L1.2 12.3 L5.5 8 Z" fill="#e04b2d" stroke="#2e0b06" stroke-width="1.15" stroke-linejoin="round"/></g><g transform="translate(1239.10 929.80) scale(0.7500)"><path d="M1.2 3.7 L3.7 1.2 L8 5.5 L12.3 1.2 L14.8 3.7 L10.5 8 L14.8 12.3 L12.3 14.8 L8 10.5 L3.7 14.8 L1.2 12.3 L5.5 8 Z" fill="#e04b2d" stroke="#2e0b06" stroke-width="1.15" stroke-linejoin="round"/></g><g transform="translate(1281.00 929.80) scale(0.7500)"><path d="M1.2 3.7 L3.7 1.2 L8 5.5 L12.3 1.2 L14.8 3.7 L10.5 8 L14.8 12.3 L12.3 14.8 L8 10.5 L3.7 14.8 L1.2 12.3 L5.5 8 Z" fill="#e04b2d" stroke="#2e0b06" stroke-width="1.15" stroke-linejoin="round"/></g><g transform="translate(1320.80 929.80) scale(0.7500)"><path d="M1.2 3.7 L3.7 1.2 L8 5.5 L12.3 1.2 L14.8 3.7 L10.5 8 L14.8 12.3 L12.3 14.8 L8 10.5 L3.7 14.8 L1.2 12.3 L5.5 8 Z" fill="#e04b2d" stroke="#2e0b06" stroke-width="1.15" stroke-linejoin="round"/></g><g transform="translate(1358.20 929.80) scale(0.7500)"><path d="M1.2 3.7 L3.7 1.2 L8 5.5 L12.3 1.2 L14.8 3.7 L10.5 8 L14.8 12.3 L12.3 14.8 L8 10.5 L3.7 14.8 L1.2 12.3 L5.5 8 Z" fill="#e04b2d" stroke="#2e0b06" stroke-width="1.15" stroke-linejoin="round"/></g><g transform="translate(1397.50 929.80) scale(0.7500)"><path d="M1.2 3.7 L3.7 1.2 L8 5.5 L12.3 1.2 L14.8 3.7 L10.5 8 L14.8 12.3 L12.3 14.8 L8 10.5 L3.7 14.8 L1.2 12.3 L5.5 8 Z" fill="#e04b2d" stroke="#2e0b06" stroke-width="1.15" stroke-linejoin="round"/></g><g transform="translate(1437.00 929.80) scale(0.7500)"><rect x="0.6" y="0.6" width="14.8" height="14.8" fill="#1fb51f" stroke="#0b3a0b" stroke-width="1.2"/><path d="M3.6 8.3 L6.3 10.9 L12.2 4.2" fill="none" stroke="#eaffea" stroke-width="1.9" stroke-linecap="round" stroke-linejoin="round"/></g><rect x="326.9" y="971.42" width="1197.1" height="1" fill="#dfe2e5"/><g transform="translate(905.90 954.06) scale(0.7500)"><rect x="0.6" y="0.6" width="14.8" height="14.8" fill="#1fb51f" stroke="#0b3a0b" stroke-width="1.2"/><path d="M3.6 8.3 L6.3 10.9 L12.2 4.2" fill="none" stroke="#eaffea" stroke-width="1.9" stroke-linecap="round" stroke-linejoin="round"/></g><g transform="translate(946.00 954.06) scale(0.7500)"><rect x="0.6" y="0.6" width="14.8" height="14.8" fill="#1fb51f" stroke="#0b3a0b" stroke-width="1.2"/><path d="M3.6 8.3 L6.3 10.9 L12.2 4.2" fill="none" stroke="#eaffea" stroke-width="1.9" stroke-linecap="round" stroke-linejoin="round"/></g><g transform="translate(988.00 954.06) scale(0.7500)"><rect x="0.6" y="0.6" width="14.8" height="14.8" fill="#1fb51f" stroke="#0b3a0b" stroke-width="1.2"/><path d="M3.6 8.3 L6.3 10.9 L12.2 4.2" fill="none" stroke="#eaffea" stroke-width="1.9" stroke-linecap="round" stroke-linejoin="round"/></g><g transform="translate(1029.80 954.06) scale(0.7500)"><rect x="0.6" y="0.6" width="14.8" height="14.8" fill="#1fb51f" stroke="#0b3a0b" stroke-width="1.2"/><path d="M3.6 8.3 L6.3 10.9 L12.2 4.2" fill="none" stroke="#eaffea" stroke-width="1.9" stroke-linecap="round" stroke-linejoin="round"/></g><g transform="translate(1072.10 954.06) scale(0.7500)"><path d="M1.2 3.7 L3.7 1.2 L8 5.5 L12.3 1.2 L14.8 3.7 L10.5 8 L14.8 12.3 L12.3 14.8 L8 10.5 L3.7 14.8 L1.2 12.3 L5.5 8 Z" fill="#e04b2d" stroke="#2e0b06" stroke-width="1.15" stroke-linejoin="round"/></g><g transform="translate(1114.00 954.06) scale(0.7500)"><path d="M1.2 3.7 L3.7 1.2 L8 5.5 L12.3 1.2 L14.8 3.7 L10.5 8 L14.8 12.3 L12.3 14.8 L8 10.5 L3.7 14.8 L1.2 12.3 L5.5 8 Z" fill="#e04b2d" stroke="#2e0b06" stroke-width="1.15" stroke-linejoin="round"/></g><g transform="translate(1155.90 954.06) scale(0.7500)"><path d="M1.2 3.7 L3.7 1.2 L8 5.5 L12.3 1.2 L14.8 3.7 L10.5 8 L14.8 12.3 L12.3 14.8 L8 10.5 L3.7 14.8 L1.2 12.3 L5.5 8 Z" fill="#e04b2d" stroke="#2e0b06" stroke-width="1.15" stroke-linejoin="round"/></g><g transform="translate(1196.90 954.06) scale(0.7500)"><path d="M1.2 3.7 L3.7 1.2 L8 5.5 L12.3 1.2 L14.8 3.7 L10.5 8 L14.8 12.3 L12.3 14.8 L8 10.5 L3.7 14.8 L1.2 12.3 L5.5 8 Z" fill="#e04b2d" stroke="#2e0b06" stroke-width="1.15" stroke-linejoin="round"/></g><g transform="translate(1239.10 954.06) scale(0.7500)"><path d="M1.2 3.7 L3.7 1.2 L8 5.5 L12.3 1.2 L14.8 3.7 L10.5 8 L14.8 12.3 L12.3 14.8 L8 10.5 L3.7 14.8 L1.2 12.3 L5.5 8 Z" fill="#e04b2d" stroke="#2e0b06" stroke-width="1.15" stroke-linejoin="round"/></g><g transform="translate(1281.00 954.06) scale(0.7500)"><path d="M1.2 3.7 L3.7 1.2 L8 5.5 L12.3 1.2 L14.8 3.7 L10.5 8 L14.8 12.3 L12.3 14.8 L8 10.5 L3.7 14.8 L1.2 12.3 L5.5 8 Z" fill="#e04b2d" stroke="#2e0b06" stroke-width="1.15" stroke-linejoin="round"/></g><g transform="translate(1320.80 954.06) scale(0.7500)"><path d="M1.2 3.7 L3.7 1.2 L8 5.5 L12.3 1.2 L14.8 3.7 L10.5 8 L14.8 12.3 L12.3 14.8 L8 10.5 L3.7 14.8 L1.2 12.3 L5.5 8 Z" fill="#e04b2d" stroke="#2e0b06" stroke-width="1.15" stroke-linejoin="round"/></g><g transform="translate(1358.20 954.06) scale(0.7500)"><rect x="0.6" y="0.6" width="14.8" height="14.8" fill="#1fb51f" stroke="#0b3a0b" stroke-width="1.2"/><path d="M3.6 8.3 L6.3 10.9 L12.2 4.2" fill="none" stroke="#eaffea" stroke-width="1.9" stroke-linecap="round" stroke-linejoin="round"/></g><g transform="translate(1397.50 954.06) scale(0.7500)"><rect x="0.6" y="0.6" width="14.8" height="14.8" fill="#1fb51f" stroke="#0b3a0b" stroke-width="1.2"/><path d="M3.6 8.3 L6.3 10.9 L12.2 4.2" fill="none" stroke="#eaffea" stroke-width="1.9" stroke-linecap="round" stroke-linejoin="round"/></g><g transform="translate(1437.00 954.06) scale(0.7500)"><rect x="0.6" y="0.6" width="14.8" height="14.8" fill="#1fb51f" stroke="#0b3a0b" stroke-width="1.2"/><path d="M3.6 8.3 L6.3 10.9 L12.2 4.2" fill="none" stroke="#eaffea" stroke-width="1.9" stroke-linecap="round" stroke-linejoin="round"/></g><rect x="326.9" y="995.68" width="1197.1" height="1" fill="#dfe2e5"/><g transform="translate(905.90 978.32) scale(0.7500)"><rect x="0.6" y="0.6" width="14.8" height="14.8" fill="#1fb51f" stroke="#0b3a0b" stroke-width="1.2"/><path d="M3.6 8.3 L6.3 10.9 L12.2 4.2" fill="none" stroke="#eaffea" stroke-width="1.9" stroke-linecap="round" stroke-linejoin="round"/></g><g transform="translate(946.00 978.32) scale(0.7500)"><path d="M1.2 3.7 L3.7 1.2 L8 5.5 L12.3 1.2 L14.8 3.7 L10.5 8 L14.8 12.3 L12.3 14.8 L8 10.5 L3.7 14.8 L1.2 12.3 L5.5 8 Z" fill="#e04b2d" stroke="#2e0b06" stroke-width="1.15" stroke-linejoin="round"/></g><g transform="translate(988.00 978.32) scale(0.7500)"><rect x="0.6" y="0.6" width="14.8" height="14.8" fill="#1fb51f" stroke="#0b3a0b" stroke-width="1.2"/><path d="M3.6 8.3 L6.3 10.9 L12.2 4.2" fill="none" stroke="#eaffea" stroke-width="1.9" stroke-linecap="round" stroke-linejoin="round"/></g><g transform="translate(1029.80 978.32) scale(0.7500)"><path d="M1.2 3.7 L3.7 1.2 L8 5.5 L12.3 1.2 L14.8 3.7 L10.5 8 L14.8 12.3 L12.3 14.8 L8 10.5 L3.7 14.8 L1.2 12.3 L5.5 8 Z" fill="#e04b2d" stroke="#2e0b06" stroke-width="1.15" stroke-linejoin="round"/></g><g transform="translate(1072.10 978.32) scale(0.7500)"><path d="M1.2 3.7 L3.7 1.2 L8 5.5 L12.3 1.2 L14.8 3.7 L10.5 8 L14.8 12.3 L12.3 14.8 L8 10.5 L3.7 14.8 L1.2 12.3 L5.5 8 Z" fill="#e04b2d" stroke="#2e0b06" stroke-width="1.15" stroke-linejoin="round"/></g><g transform="translate(1114.00 978.32) scale(0.7500)"><path d="M1.2 3.7 L3.7 1.2 L8 5.5 L12.3 1.2 L14.8 3.7 L10.5 8 L14.8 12.3 L12.3 14.8 L8 10.5 L3.7 14.8 L1.2 12.3 L5.5 8 Z" fill="#e04b2d" stroke="#2e0b06" stroke-width="1.15" stroke-linejoin="round"/></g><g transform="translate(1155.90 978.32) scale(0.7500)"><path d="M1.2 3.7 L3.7 1.2 L8 5.5 L12.3 1.2 L14.8 3.7 L10.5 8 L14.8 12.3 L12.3 14.8 L8 10.5 L3.7 14.8 L1.2 12.3 L5.5 8 Z" fill="#e04b2d" stroke="#2e0b06" stroke-width="1.15" stroke-linejoin="round"/></g><g transform="translate(1196.90 978.32) scale(0.7500)"><path d="M1.2 3.7 L3.7 1.2 L8 5.5 L12.3 1.2 L14.8 3.7 L10.5 8 L14.8 12.3 L12.3 14.8 L8 10.5 L3.7 14.8 L1.2 12.3 L5.5 8 Z" fill="#e04b2d" stroke="#2e0b06" stroke-width="1.15" stroke-linejoin="round"/></g><g transform="translate(1239.10 978.32) scale(0.7500)"><path d="M1.2 3.7 L3.7 1.2 L8 5.5 L12.3 1.2 L14.8 3.7 L10.5 8 L14.8 12.3 L12.3 14.8 L8 10.5 L3.7 14.8 L1.2 12.3 L5.5 8 Z" fill="#e04b2d" stroke="#2e0b06" stroke-width="1.15" stroke-linejoin="round"/></g><g transform="translate(1281.00 978.32) scale(0.7500)"><path d="M1.2 3.7 L3.7 1.2 L8 5.5 L12.3 1.2 L14.8 3.7 L10.5 8 L14.8 12.3 L12.3 14.8 L8 10.5 L3.7 14.8 L1.2 12.3 L5.5 8 Z" fill="#e04b2d" stroke="#2e0b06" stroke-width="1.15" stroke-linejoin="round"/></g><g transform="translate(1320.80 978.32) scale(0.7500)"><path d="M1.2 3.7 L3.7 1.2 L8 5.5 L12.3 1.2 L14.8 3.7 L10.5 8 L14.8 12.3 L12.3 14.8 L8 10.5 L3.7 14.8 L1.2 12.3 L5.5 8 Z" fill="#e04b2d" stroke="#2e0b06" stroke-width="1.15" stroke-linejoin="round"/></g><g transform="translate(1358.20 978.32) scale(0.7500)"><path d="M1.2 3.7 L3.7 1.2 L8 5.5 L12.3 1.2 L14.8 3.7 L10.5 8 L14.8 12.3 L12.3 14.8 L8 10.5 L3.7 14.8 L1.2 12.3 L5.5 8 Z" fill="#e04b2d" stroke="#2e0b06" stroke-width="1.15" stroke-linejoin="round"/></g><g transform="translate(1397.50 978.32) scale(0.7500)"><path d="M1.2 3.7 L3.7 1.2 L8 5.5 L12.3 1.2 L14.8 3.7 L10.5 8 L14.8 12.3 L12.3 14.8 L8 10.5 L3.7 14.8 L1.2 12.3 L5.5 8 Z" fill="#e04b2d" stroke="#2e0b06" stroke-width="1.15" stroke-linejoin="round"/></g><g transform="translate(1437.00 978.32) scale(0.7500)"><rect x="0.6" y="0.6" width="14.8" height="14.8" fill="#1fb51f" stroke="#0b3a0b" stroke-width="1.2"/><path d="M3.6 8.3 L6.3 10.9 L12.2 4.2" fill="none" stroke="#eaffea" stroke-width="1.9" stroke-linecap="round" stroke-linejoin="round"/></g><rect x="326.9" y="1019.94" width="1197.1" height="1" fill="#dfe2e5"/><g transform="translate(905.90 1002.58) scale(0.7500)"><rect x="0.6" y="0.6" width="14.8" height="14.8" fill="#1fb51f" stroke="#0b3a0b" stroke-width="1.2"/><path d="M3.6 8.3 L6.3 10.9 L12.2 4.2" fill="none" stroke="#eaffea" stroke-width="1.9" stroke-linecap="round" stroke-linejoin="round"/></g><g transform="translate(946.00 1002.58) scale(0.7500)"><rect x="0.6" y="0.6" width="14.8" height="14.8" fill="#1fb51f" stroke="#0b3a0b" stroke-width="1.2"/><path d="M3.6 8.3 L6.3 10.9 L12.2 4.2" fill="none" stroke="#eaffea" stroke-width="1.9" stroke-linecap="round" stroke-linejoin="round"/></g><g transform="translate(988.00 1002.58) scale(0.7500)"><rect x="0.6" y="0.6" width="14.8" height="14.8" fill="#1fb51f" stroke="#0b3a0b" stroke-width="1.2"/><path d="M3.6 8.3 L6.3 10.9 L12.2 4.2" fill="none" stroke="#eaffea" stroke-width="1.9" stroke-linecap="round" stroke-linejoin="round"/></g><g transform="translate(1029.80 1002.58) scale(0.7500)"><rect x="0.6" y="0.6" width="14.8" height="14.8" fill="#1fb51f" stroke="#0b3a0b" stroke-width="1.2"/><path d="M3.6 8.3 L6.3 10.9 L12.2 4.2" fill="none" stroke="#eaffea" stroke-width="1.9" stroke-linecap="round" stroke-linejoin="round"/></g><g transform="translate(1072.10 1002.58) scale(0.7500)"><rect x="0.6" y="0.6" width="14.8" height="14.8" fill="#1fb51f" stroke="#0b3a0b" stroke-width="1.2"/><path d="M3.6 8.3 L6.3 10.9 L12.2 4.2" fill="none" stroke="#eaffea" stroke-width="1.9" stroke-linecap="round" stroke-linejoin="round"/></g><g transform="translate(1114.00 1002.58) scale(0.7500)"><rect x="0.6" y="0.6" width="14.8" height="14.8" fill="#1fb51f" stroke="#0b3a0b" stroke-width="1.2"/><path d="M3.6 8.3 L6.3 10.9 L12.2 4.2" fill="none" stroke="#eaffea" stroke-width="1.9" stroke-linecap="round" stroke-linejoin="round"/></g><g transform="translate(1155.90 1002.58) scale(0.7500)"><rect x="0.6" y="0.6" width="14.8" height="14.8" fill="#1fb51f" stroke="#0b3a0b" stroke-width="1.2"/><path d="M3.6 8.3 L6.3 10.9 L12.2 4.2" fill="none" stroke="#eaffea" stroke-width="1.9" stroke-linecap="round" stroke-linejoin="round"/></g><g transform="translate(1196.90 1002.58) scale(0.7500)"><rect x="0.6" y="0.6" width="14.8" height="14.8" fill="#1fb51f" stroke="#0b3a0b" stroke-width="1.2"/><path d="M3.6 8.3 L6.3 10.9 L12.2 4.2" fill="none" stroke="#eaffea" stroke-width="1.9" stroke-linecap="round" stroke-linejoin="round"/></g><g transform="translate(1239.10 1002.58) scale(0.7500)"><rect x="0.6" y="0.6" width="14.8" height="14.8" fill="#1fb51f" stroke="#0b3a0b" stroke-width="1.2"/><path d="M3.6 8.3 L6.3 10.9 L12.2 4.2" fill="none" stroke="#eaffea" stroke-width="1.9" stroke-linecap="round" stroke-linejoin="round"/></g><g transform="translate(1281.00 1002.58) scale(0.7500)"><rect x="0.6" y="0.6" width="14.8" height="14.8" fill="#1fb51f" stroke="#0b3a0b" stroke-width="1.2"/><path d="M3.6 8.3 L6.3 10.9 L12.2 4.2" fill="none" stroke="#eaffea" stroke-width="1.9" stroke-linecap="round" stroke-linejoin="round"/></g><g transform="translate(1320.80 1002.58) scale(0.7500)"><path d="M1.2 3.7 L3.7 1.2 L8 5.5 L12.3 1.2 L14.8 3.7 L10.5 8 L14.8 12.3 L12.3 14.8 L8 10.5 L3.7 14.8 L1.2 12.3 L5.5 8 Z" fill="#e04b2d" stroke="#2e0b06" stroke-width="1.15" stroke-linejoin="round"/></g><g transform="translate(1358.20 1002.58) scale(0.7500)"><path d="M1.2 3.7 L3.7 1.2 L8 5.5 L12.3 1.2 L14.8 3.7 L10.5 8 L14.8 12.3 L12.3 14.8 L8 10.5 L3.7 14.8 L1.2 12.3 L5.5 8 Z" fill="#e04b2d" stroke="#2e0b06" stroke-width="1.15" stroke-linejoin="round"/></g><g transform="translate(1397.50 1002.58) scale(0.7500)"><path d="M1.2 3.7 L3.7 1.2 L8 5.5 L12.3 1.2 L14.8 3.7 L10.5 8 L14.8 12.3 L12.3 14.8 L8 10.5 L3.7 14.8 L1.2 12.3 L5.5 8 Z" fill="#e04b2d" stroke="#2e0b06" stroke-width="1.15" stroke-linejoin="round"/></g><g transform="translate(1437.00 1002.58) scale(0.7500)"><path d="M1.2 3.7 L3.7 1.2 L8 5.5 L12.3 1.2 L14.8 3.7 L10.5 8 L14.8 12.3 L12.3 14.8 L8 10.5 L3.7 14.8 L1.2 12.3 L5.5 8 Z" fill="#e04b2d" stroke="#2e0b06" stroke-width="1.15" stroke-linejoin="round"/></g><rect x="326.9" y="1044.20" width="1197.1" height="1" fill="#dfe2e5"/><g transform="translate(905.90 1026.84) scale(0.7500)"><rect x="0.6" y="0.6" width="14.8" height="14.8" fill="#1fb51f" stroke="#0b3a0b" stroke-width="1.2"/><path d="M3.6 8.3 L6.3 10.9 L12.2 4.2" fill="none" stroke="#eaffea" stroke-width="1.9" stroke-linecap="round" stroke-linejoin="round"/></g><g transform="translate(946.00 1026.84) scale(0.7500)"><rect x="0.6" y="0.6" width="14.8" height="14.8" fill="#1fb51f" stroke="#0b3a0b" stroke-width="1.2"/><path d="M3.6 8.3 L6.3 10.9 L12.2 4.2" fill="none" stroke="#eaffea" stroke-width="1.9" stroke-linecap="round" stroke-linejoin="round"/></g><g transform="translate(988.00 1026.84) scale(0.7500)"><rect x="0.6" y="0.6" width="14.8" height="14.8" fill="#1fb51f" stroke="#0b3a0b" stroke-width="1.2"/><path d="M3.6 8.3 L6.3 10.9 L12.2 4.2" fill="none" stroke="#eaffea" stroke-width="1.9" stroke-linecap="round" stroke-linejoin="round"/></g><g transform="translate(1029.80 1026.84) scale(0.7500)"><rect x="0.6" y="0.6" width="14.8" height="14.8" fill="#1fb51f" stroke="#0b3a0b" stroke-width="1.2"/><path d="M3.6 8.3 L6.3 10.9 L12.2 4.2" fill="none" stroke="#eaffea" stroke-width="1.9" stroke-linecap="round" stroke-linejoin="round"/></g><g transform="translate(1072.10 1026.84) scale(0.7500)"><path d="M1.2 3.7 L3.7 1.2 L8 5.5 L12.3 1.2 L14.8 3.7 L10.5 8 L14.8 12.3 L12.3 14.8 L8 10.5 L3.7 14.8 L1.2 12.3 L5.5 8 Z" fill="#e04b2d" stroke="#2e0b06" stroke-width="1.15" stroke-linejoin="round"/></g><g transform="translate(1114.00 1026.84) scale(0.7500)"><path d="M1.2 3.7 L3.7 1.2 L8 5.5 L12.3 1.2 L14.8 3.7 L10.5 8 L14.8 12.3 L12.3 14.8 L8 10.5 L3.7 14.8 L1.2 12.3 L5.5 8 Z" fill="#e04b2d" stroke="#2e0b06" stroke-width="1.15" stroke-linejoin="round"/></g><g transform="translate(1155.90 1026.84) scale(0.7500)"><path d="M1.2 3.7 L3.7 1.2 L8 5.5 L12.3 1.2 L14.8 3.7 L10.5 8 L14.8 12.3 L12.3 14.8 L8 10.5 L3.7 14.8 L1.2 12.3 L5.5 8 Z" fill="#e04b2d" stroke="#2e0b06" stroke-width="1.15" stroke-linejoin="round"/></g><g transform="translate(1196.90 1026.84) scale(0.7500)"><path d="M1.2 3.7 L3.7 1.2 L8 5.5 L12.3 1.2 L14.8 3.7 L10.5 8 L14.8 12.3 L12.3 14.8 L8 10.5 L3.7 14.8 L1.2 12.3 L5.5 8 Z" fill="#e04b2d" stroke="#2e0b06" stroke-width="1.15" stroke-linejoin="round"/></g><g transform="translate(1239.10 1026.84) scale(0.7500)"><path d="M1.2 3.7 L3.7 1.2 L8 5.5 L12.3 1.2 L14.8 3.7 L10.5 8 L14.8 12.3 L12.3 14.8 L8 10.5 L3.7 14.8 L1.2 12.3 L5.5 8 Z" fill="#e04b2d" stroke="#2e0b06" stroke-width="1.15" stroke-linejoin="round"/></g><g transform="translate(1281.00 1026.84) scale(0.7500)"><path d="M1.2 3.7 L3.7 1.2 L8 5.5 L12.3 1.2 L14.8 3.7 L10.5 8 L14.8 12.3 L12.3 14.8 L8 10.5 L3.7 14.8 L1.2 12.3 L5.5 8 Z" fill="#e04b2d" stroke="#2e0b06" stroke-width="1.15" stroke-linejoin="round"/></g><g transform="translate(1320.80 1026.84) scale(0.7500)"><path d="M1.2 3.7 L3.7 1.2 L8 5.5 L12.3 1.2 L14.8 3.7 L10.5 8 L14.8 12.3 L12.3 14.8 L8 10.5 L3.7 14.8 L1.2 12.3 L5.5 8 Z" fill="#e04b2d" stroke="#2e0b06" stroke-width="1.15" stroke-linejoin="round"/></g><g transform="translate(1358.20 1026.84) scale(0.7500)"><rect x="0.6" y="0.6" width="14.8" height="14.8" fill="#1fb51f" stroke="#0b3a0b" stroke-width="1.2"/><path d="M3.6 8.3 L6.3 10.9 L12.2 4.2" fill="none" stroke="#eaffea" stroke-width="1.9" stroke-linecap="round" stroke-linejoin="round"/></g><g transform="translate(1397.50 1026.84) scale(0.7500)"><rect x="0.6" y="0.6" width="14.8" height="14.8" fill="#1fb51f" stroke="#0b3a0b" stroke-width="1.2"/><path d="M3.6 8.3 L6.3 10.9 L12.2 4.2" fill="none" stroke="#eaffea" stroke-width="1.9" stroke-linecap="round" stroke-linejoin="round"/></g><g transform="translate(1437.00 1026.84) scale(0.7500)"><path d="M1.2 3.7 L3.7 1.2 L8 5.5 L12.3 1.2 L14.8 3.7 L10.5 8 L14.8 12.3 L12.3 14.8 L8 10.5 L3.7 14.8 L1.2 12.3 L5.5 8 Z" fill="#e04b2d" stroke="#2e0b06" stroke-width="1.15" stroke-linejoin="round"/></g><rect x="326.9" y="1068.46" width="1197.1" height="1" fill="#dfe2e5"/><g transform="translate(905.90 1051.10) scale(0.7500)"><path d="M1.2 3.7 L3.7 1.2 L8 5.5 L12.3 1.2 L14.8 3.7 L10.5 8 L14.8 12.3 L12.3 14.8 L8 10.5 L3.7 14.8 L1.2 12.3 L5.5 8 Z" fill="#e04b2d" stroke="#2e0b06" stroke-width="1.15" stroke-linejoin="round"/></g><g transform="translate(946.00 1051.10) scale(0.7500)"><rect x="0.6" y="0.6" width="14.8" height="14.8" fill="#1fb51f" stroke="#0b3a0b" stroke-width="1.2"/><path d="M3.6 8.3 L6.3 10.9 L12.2 4.2" fill="none" stroke="#eaffea" stroke-width="1.9" stroke-linecap="round" stroke-linejoin="round"/></g><g transform="translate(988.00 1051.10) scale(0.7500)"><rect x="0.6" y="0.6" width="14.8" height="14.8" fill="#1fb51f" stroke="#0b3a0b" stroke-width="1.2"/><path d="M3.6 8.3 L6.3 10.9 L12.2 4.2" fill="none" stroke="#eaffea" stroke-width="1.9" stroke-linecap="round" stroke-linejoin="round"/></g><g transform="translate(1029.80 1051.10) scale(0.7500)"><rect x="0.6" y="0.6" width="14.8" height="14.8" fill="#1fb51f" stroke="#0b3a0b" stroke-width="1.2"/><path d="M3.6 8.3 L6.3 10.9 L12.2 4.2" fill="none" stroke="#eaffea" stroke-width="1.9" stroke-linecap="round" stroke-linejoin="round"/></g><g transform="translate(1072.10 1051.10) scale(0.7500)"><rect x="0.6" y="0.6" width="14.8" height="14.8" fill="#1fb51f" stroke="#0b3a0b" stroke-width="1.2"/><path d="M3.6 8.3 L6.3 10.9 L12.2 4.2" fill="none" stroke="#eaffea" stroke-width="1.9" stroke-linecap="round" stroke-linejoin="round"/></g><g transform="translate(1114.00 1051.10) scale(0.7500)"><rect x="0.6" y="0.6" width="14.8" height="14.8" fill="#1fb51f" stroke="#0b3a0b" stroke-width="1.2"/><path d="M3.6 8.3 L6.3 10.9 L12.2 4.2" fill="none" stroke="#eaffea" stroke-width="1.9" stroke-linecap="round" stroke-linejoin="round"/></g><g transform="translate(1155.90 1051.10) scale(0.7500)"><rect x="0.6" y="0.6" width="14.8" height="14.8" fill="#1fb51f" stroke="#0b3a0b" stroke-width="1.2"/><path d="M3.6 8.3 L6.3 10.9 L12.2 4.2" fill="none" stroke="#eaffea" stroke-width="1.9" stroke-linecap="round" stroke-linejoin="round"/></g><g transform="translate(1196.90 1051.10) scale(0.7500)"><rect x="0.6" y="0.6" width="14.8" height="14.8" fill="#1fb51f" stroke="#0b3a0b" stroke-width="1.2"/><path d="M3.6 8.3 L6.3 10.9 L12.2 4.2" fill="none" stroke="#eaffea" stroke-width="1.9" stroke-linecap="round" stroke-linejoin="round"/></g><g transform="translate(1239.10 1051.10) scale(0.7500)"><rect x="0.6" y="0.6" width="14.8" height="14.8" fill="#1fb51f" stroke="#0b3a0b" stroke-width="1.2"/><path d="M3.6 8.3 L6.3 10.9 L12.2 4.2" fill="none" stroke="#eaffea" stroke-width="1.9" stroke-linecap="round" stroke-linejoin="round"/></g><g transform="translate(1281.00 1051.10) scale(0.7500)"><rect x="0.6" y="0.6" width="14.8" height="14.8" fill="#1fb51f" stroke="#0b3a0b" stroke-width="1.2"/><path d="M3.6 8.3 L6.3 10.9 L12.2 4.2" fill="none" stroke="#eaffea" stroke-width="1.9" stroke-linecap="round" stroke-linejoin="round"/></g><g transform="translate(1320.80 1051.10) scale(0.7500)"><path d="M1.2 3.7 L3.7 1.2 L8 5.5 L12.3 1.2 L14.8 3.7 L10.5 8 L14.8 12.3 L12.3 14.8 L8 10.5 L3.7 14.8 L1.2 12.3 L5.5 8 Z" fill="#e04b2d" stroke="#2e0b06" stroke-width="1.15" stroke-linejoin="round"/></g><g transform="translate(1358.20 1051.10) scale(0.7500)"><path d="M1.2 3.7 L3.7 1.2 L8 5.5 L12.3 1.2 L14.8 3.7 L10.5 8 L14.8 12.3 L12.3 14.8 L8 10.5 L3.7 14.8 L1.2 12.3 L5.5 8 Z" fill="#e04b2d" stroke="#2e0b06" stroke-width="1.15" stroke-linejoin="round"/></g><g transform="translate(1397.50 1051.10) scale(0.7500)"><path d="M1.2 3.7 L3.7 1.2 L8 5.5 L12.3 1.2 L14.8 3.7 L10.5 8 L14.8 12.3 L12.3 14.8 L8 10.5 L3.7 14.8 L1.2 12.3 L5.5 8 Z" fill="#e04b2d" stroke="#2e0b06" stroke-width="1.15" stroke-linejoin="round"/></g><g transform="translate(1437.00 1051.10) scale(0.7500)"><rect x="0.6" y="0.6" width="14.8" height="14.8" fill="#1fb51f" stroke="#0b3a0b" stroke-width="1.2"/><path d="M3.6 8.3 L6.3 10.9 L12.2 4.2" fill="none" stroke="#eaffea" stroke-width="1.9" stroke-linecap="round" stroke-linejoin="round"/></g><rect x="326.9" y="1092.72" width="1197.1" height="1" fill="#dfe2e5"/><g transform="translate(905.90 1075.36) scale(0.7500)"><path d="M9.3 0.6 L0.6 9.3 L7 9.3 L5.6 15.4 L14.6 6.6 L7.9 6.6 Z" fill="#f7c548" stroke="#1a1408" stroke-width="1" stroke-linejoin="round"/></g><g transform="translate(946.00 1075.36) scale(0.7500)"><path d="M9.3 0.6 L0.6 9.3 L7 9.3 L5.6 15.4 L14.6 6.6 L7.9 6.6 Z" fill="#f7c548" stroke="#1a1408" stroke-width="1" stroke-linejoin="round"/></g><g transform="translate(988.00 1075.36) scale(0.7500)"><path d="M9.3 0.6 L0.6 9.3 L7 9.3 L5.6 15.4 L14.6 6.6 L7.9 6.6 Z" fill="#f7c548" stroke="#1a1408" stroke-width="1" stroke-linejoin="round"/></g><g transform="translate(1029.80 1075.36) scale(0.7500)"><path d="M9.3 0.6 L0.6 9.3 L7 9.3 L5.6 15.4 L14.6 6.6 L7.9 6.6 Z" fill="#f7c548" stroke="#1a1408" stroke-width="1" stroke-linejoin="round"/></g><g transform="translate(1072.10 1075.36) scale(0.7500)"><path d="M9.3 0.6 L0.6 9.3 L7 9.3 L5.6 15.4 L14.6 6.6 L7.9 6.6 Z" fill="#f7c548" stroke="#1a1408" stroke-width="1" stroke-linejoin="round"/></g><g transform="translate(1114.00 1075.36) scale(0.7500)"><path d="M9.3 0.6 L0.6 9.3 L7 9.3 L5.6 15.4 L14.6 6.6 L7.9 6.6 Z" fill="#f7c548" stroke="#1a1408" stroke-width="1" stroke-linejoin="round"/></g><g transform="translate(1155.90 1075.36) scale(0.7500)"><path d="M9.3 0.6 L0.6 9.3 L7 9.3 L5.6 15.4 L14.6 6.6 L7.9 6.6 Z" fill="#f7c548" stroke="#1a1408" stroke-width="1" stroke-linejoin="round"/></g><g transform="translate(1196.90 1075.36) scale(0.7500)"><path d="M9.3 0.6 L0.6 9.3 L7 9.3 L5.6 15.4 L14.6 6.6 L7.9 6.6 Z" fill="#f7c548" stroke="#1a1408" stroke-width="1" stroke-linejoin="round"/></g><g transform="translate(1239.10 1075.36) scale(0.7500)"><path d="M9.3 0.6 L0.6 9.3 L7 9.3 L5.6 15.4 L14.6 6.6 L7.9 6.6 Z" fill="#f7c548" stroke="#1a1408" stroke-width="1" stroke-linejoin="round"/></g><g transform="translate(1281.00 1075.36) scale(0.7500)"><path d="M9.3 0.6 L0.6 9.3 L7 9.3 L5.6 15.4 L14.6 6.6 L7.9 6.6 Z" fill="#f7c548" stroke="#1a1408" stroke-width="1" stroke-linejoin="round"/></g><g transform="translate(1320.80 1075.36) scale(0.7500)"><path d="M9.3 0.6 L0.6 9.3 L7 9.3 L5.6 15.4 L14.6 6.6 L7.9 6.6 Z" fill="#f7c548" stroke="#1a1408" stroke-width="1" stroke-linejoin="round"/></g><g transform="translate(1358.20 1075.36) scale(0.7500)"><path d="M9.3 0.6 L0.6 9.3 L7 9.3 L5.6 15.4 L14.6 6.6 L7.9 6.6 Z" fill="#f7c548" stroke="#1a1408" stroke-width="1" stroke-linejoin="round"/></g><g transform="translate(1397.50 1075.36) scale(0.7500)"><path d="M9.3 0.6 L0.6 9.3 L7 9.3 L5.6 15.4 L14.6 6.6 L7.9 6.6 Z" fill="#f7c548" stroke="#1a1408" stroke-width="1" stroke-linejoin="round"/></g><g transform="translate(1437.00 1075.36) scale(0.7500)"><path d="M9.3 0.6 L0.6 9.3 L7 9.3 L5.6 15.4 L14.6 6.6 L7.9 6.6 Z" fill="#f7c548" stroke="#1a1408" stroke-width="1" stroke-linejoin="round"/></g><rect x="326.9" y="1116.98" width="1197.1" height="1" fill="#dfe2e5"/><g transform="translate(905.90 1099.62) scale(0.7500)"><rect x="0.6" y="0.6" width="14.8" height="14.8" fill="#1fb51f" stroke="#0b3a0b" stroke-width="1.2"/><path d="M3.6 8.3 L6.3 10.9 L12.2 4.2" fill="none" stroke="#eaffea" stroke-width="1.9" stroke-linecap="round" stroke-linejoin="round"/></g><g transform="translate(946.00 1099.62) scale(0.7500)"><rect x="0.6" y="0.6" width="14.8" height="14.8" fill="#1fb51f" stroke="#0b3a0b" stroke-width="1.2"/><path d="M3.6 8.3 L6.3 10.9 L12.2 4.2" fill="none" stroke="#eaffea" stroke-width="1.9" stroke-linecap="round" stroke-linejoin="round"/></g><g transform="translate(988.00 1099.62) scale(0.7500)"><rect x="0.6" y="0.6" width="14.8" height="14.8" fill="#1fb51f" stroke="#0b3a0b" stroke-width="1.2"/><path d="M3.6 8.3 L6.3 10.9 L12.2 4.2" fill="none" stroke="#eaffea" stroke-width="1.9" stroke-linecap="round" stroke-linejoin="round"/></g><g transform="translate(1029.80 1099.62) scale(0.7500)"><rect x="0.6" y="0.6" width="14.8" height="14.8" fill="#1fb51f" stroke="#0b3a0b" stroke-width="1.2"/><path d="M3.6 8.3 L6.3 10.9 L12.2 4.2" fill="none" stroke="#eaffea" stroke-width="1.9" stroke-linecap="round" stroke-linejoin="round"/></g><g transform="translate(1072.10 1099.62) scale(0.7500)"><path d="M1.2 3.7 L3.7 1.2 L8 5.5 L12.3 1.2 L14.8 3.7 L10.5 8 L14.8 12.3 L12.3 14.8 L8 10.5 L3.7 14.8 L1.2 12.3 L5.5 8 Z" fill="#e04b2d" stroke="#2e0b06" stroke-width="1.15" stroke-linejoin="round"/></g><g transform="translate(1114.00 1099.62) scale(0.7500)"><path d="M1.2 3.7 L3.7 1.2 L8 5.5 L12.3 1.2 L14.8 3.7 L10.5 8 L14.8 12.3 L12.3 14.8 L8 10.5 L3.7 14.8 L1.2 12.3 L5.5 8 Z" fill="#e04b2d" stroke="#2e0b06" stroke-width="1.15" stroke-linejoin="round"/></g><g transform="translate(1155.90 1099.62) scale(0.7500)"><path d="M1.2 3.7 L3.7 1.2 L8 5.5 L12.3 1.2 L14.8 3.7 L10.5 8 L14.8 12.3 L12.3 14.8 L8 10.5 L3.7 14.8 L1.2 12.3 L5.5 8 Z" fill="#e04b2d" stroke="#2e0b06" stroke-width="1.15" stroke-linejoin="round"/></g><g transform="translate(1196.90 1099.62) scale(0.7500)"><path d="M1.2 3.7 L3.7 1.2 L8 5.5 L12.3 1.2 L14.8 3.7 L10.5 8 L14.8 12.3 L12.3 14.8 L8 10.5 L3.7 14.8 L1.2 12.3 L5.5 8 Z" fill="#e04b2d" stroke="#2e0b06" stroke-width="1.15" stroke-linejoin="round"/></g><g transform="translate(1239.10 1099.62) scale(0.7500)"><path d="M1.2 3.7 L3.7 1.2 L8 5.5 L12.3 1.2 L14.8 3.7 L10.5 8 L14.8 12.3 L12.3 14.8 L8 10.5 L3.7 14.8 L1.2 12.3 L5.5 8 Z" fill="#e04b2d" stroke="#2e0b06" stroke-width="1.15" stroke-linejoin="round"/></g><g transform="translate(1281.00 1099.62) scale(0.7500)"><path d="M1.2 3.7 L3.7 1.2 L8 5.5 L12.3 1.2 L14.8 3.7 L10.5 8 L14.8 12.3 L12.3 14.8 L8 10.5 L3.7 14.8 L1.2 12.3 L5.5 8 Z" fill="#e04b2d" stroke="#2e0b06" stroke-width="1.15" stroke-linejoin="round"/></g><g transform="translate(1320.80 1099.62) scale(0.7500)"><rect x="0.6" y="0.6" width="14.8" height="14.8" fill="#1fb51f" stroke="#0b3a0b" stroke-width="1.2"/><path d="M3.6 8.3 L6.3 10.9 L12.2 4.2" fill="none" stroke="#eaffea" stroke-width="1.9" stroke-linecap="round" stroke-linejoin="round"/></g><g transform="translate(1358.20 1099.62) scale(0.7500)"><path d="M1.2 3.7 L3.7 1.2 L8 5.5 L12.3 1.2 L14.8 3.7 L10.5 8 L14.8 12.3 L12.3 14.8 L8 10.5 L3.7 14.8 L1.2 12.3 L5.5 8 Z" fill="#e04b2d" stroke="#2e0b06" stroke-width="1.15" stroke-linejoin="round"/></g><g transform="translate(1397.50 1099.62) scale(0.7500)"><path d="M1.2 3.7 L3.7 1.2 L8 5.5 L12.3 1.2 L14.8 3.7 L10.5 8 L14.8 12.3 L12.3 14.8 L8 10.5 L3.7 14.8 L1.2 12.3 L5.5 8 Z" fill="#e04b2d" stroke="#2e0b06" stroke-width="1.15" stroke-linejoin="round"/></g><g transform="translate(1437.00 1099.62) scale(0.7500)"><path d="M1.2 3.7 L3.7 1.2 L8 5.5 L12.3 1.2 L14.8 3.7 L10.5 8 L14.8 12.3 L12.3 14.8 L8 10.5 L3.7 14.8 L1.2 12.3 L5.5 8 Z" fill="#e04b2d" stroke="#2e0b06" stroke-width="1.15" stroke-linejoin="round"/></g><rect x="326.9" y="1141.24" width="1197.1" height="1" fill="#dfe2e5"/><g transform="translate(905.90 1123.88) scale(0.7500)"><rect x="0.6" y="0.6" width="14.8" height="14.8" fill="#1fb51f" stroke="#0b3a0b" stroke-width="1.2"/><path d="M3.6 8.3 L6.3 10.9 L12.2 4.2" fill="none" stroke="#eaffea" stroke-width="1.9" stroke-linecap="round" stroke-linejoin="round"/></g><g transform="translate(946.00 1123.88) scale(0.7500)"><rect x="0.6" y="0.6" width="14.8" height="14.8" fill="#1fb51f" stroke="#0b3a0b" stroke-width="1.2"/><path d="M3.6 8.3 L6.3 10.9 L12.2 4.2" fill="none" stroke="#eaffea" stroke-width="1.9" stroke-linecap="round" stroke-linejoin="round"/></g><g transform="translate(988.00 1123.88) scale(0.7500)"><rect x="0.6" y="0.6" width="14.8" height="14.8" fill="#1fb51f" stroke="#0b3a0b" stroke-width="1.2"/><path d="M3.6 8.3 L6.3 10.9 L12.2 4.2" fill="none" stroke="#eaffea" stroke-width="1.9" stroke-linecap="round" stroke-linejoin="round"/></g><g transform="translate(1029.80 1123.88) scale(0.7500)"><rect x="0.6" y="0.6" width="14.8" height="14.8" fill="#1fb51f" stroke="#0b3a0b" stroke-width="1.2"/><path d="M3.6 8.3 L6.3 10.9 L12.2 4.2" fill="none" stroke="#eaffea" stroke-width="1.9" stroke-linecap="round" stroke-linejoin="round"/></g><g transform="translate(1072.10 1123.88) scale(0.7500)"><path d="M1.2 3.7 L3.7 1.2 L8 5.5 L12.3 1.2 L14.8 3.7 L10.5 8 L14.8 12.3 L12.3 14.8 L8 10.5 L3.7 14.8 L1.2 12.3 L5.5 8 Z" fill="#e04b2d" stroke="#2e0b06" stroke-width="1.15" stroke-linejoin="round"/></g><g transform="translate(1114.00 1123.88) scale(0.7500)"><path d="M1.2 3.7 L3.7 1.2 L8 5.5 L12.3 1.2 L14.8 3.7 L10.5 8 L14.8 12.3 L12.3 14.8 L8 10.5 L3.7 14.8 L1.2 12.3 L5.5 8 Z" fill="#e04b2d" stroke="#2e0b06" stroke-width="1.15" stroke-linejoin="round"/></g><g transform="translate(1155.90 1123.88) scale(0.7500)"><path d="M1.2 3.7 L3.7 1.2 L8 5.5 L12.3 1.2 L14.8 3.7 L10.5 8 L14.8 12.3 L12.3 14.8 L8 10.5 L3.7 14.8 L1.2 12.3 L5.5 8 Z" fill="#e04b2d" stroke="#2e0b06" stroke-width="1.15" stroke-linejoin="round"/></g><g transform="translate(1196.90 1123.88) scale(0.7500)"><path d="M1.2 3.7 L3.7 1.2 L8 5.5 L12.3 1.2 L14.8 3.7 L10.5 8 L14.8 12.3 L12.3 14.8 L8 10.5 L3.7 14.8 L1.2 12.3 L5.5 8 Z" fill="#e04b2d" stroke="#2e0b06" stroke-width="1.15" stroke-linejoin="round"/></g><g transform="translate(1239.10 1123.88) scale(0.7500)"><path d="M1.2 3.7 L3.7 1.2 L8 5.5 L12.3 1.2 L14.8 3.7 L10.5 8 L14.8 12.3 L12.3 14.8 L8 10.5 L3.7 14.8 L1.2 12.3 L5.5 8 Z" fill="#e04b2d" stroke="#2e0b06" stroke-width="1.15" stroke-linejoin="round"/></g><g transform="translate(1281.00 1123.88) scale(0.7500)"><path d="M1.2 3.7 L3.7 1.2 L8 5.5 L12.3 1.2 L14.8 3.7 L10.5 8 L14.8 12.3 L12.3 14.8 L8 10.5 L3.7 14.8 L1.2 12.3 L5.5 8 Z" fill="#e04b2d" stroke="#2e0b06" stroke-width="1.15" stroke-linejoin="round"/></g><g transform="translate(1320.80 1123.88) scale(0.7500)"><path d="M1.2 3.7 L3.7 1.2 L8 5.5 L12.3 1.2 L14.8 3.7 L10.5 8 L14.8 12.3 L12.3 14.8 L8 10.5 L3.7 14.8 L1.2 12.3 L5.5 8 Z" fill="#e04b2d" stroke="#2e0b06" stroke-width="1.15" stroke-linejoin="round"/></g><g transform="translate(1358.20 1123.88) scale(0.7500)"><rect x="0.6" y="0.6" width="14.8" height="14.8" fill="#1fb51f" stroke="#0b3a0b" stroke-width="1.2"/><path d="M3.6 8.3 L6.3 10.9 L12.2 4.2" fill="none" stroke="#eaffea" stroke-width="1.9" stroke-linecap="round" stroke-linejoin="round"/></g><g transform="translate(1397.50 1123.88) scale(0.7500)"><rect x="0.6" y="0.6" width="14.8" height="14.8" fill="#1fb51f" stroke="#0b3a0b" stroke-width="1.2"/><path d="M3.6 8.3 L6.3 10.9 L12.2 4.2" fill="none" stroke="#eaffea" stroke-width="1.9" stroke-linecap="round" stroke-linejoin="round"/></g><g transform="translate(1437.00 1123.88) scale(0.7500)"><path d="M1.2 3.7 L3.7 1.2 L8 5.5 L12.3 1.2 L14.8 3.7 L10.5 8 L14.8 12.3 L12.3 14.8 L8 10.5 L3.7 14.8 L1.2 12.3 L5.5 8 Z" fill="#e04b2d" stroke="#2e0b06" stroke-width="1.15" stroke-linejoin="round"/></g><g transform="translate(905.90 1148.14) scale(0.7500)"><path d="M9.3 0.6 L0.6 9.3 L7 9.3 L5.6 15.4 L14.6 6.6 L7.9 6.6 Z" fill="#f7c548" stroke="#1a1408" stroke-width="1" stroke-linejoin="round"/></g><g transform="translate(946.00 1148.14) scale(0.7500)"><path d="M9.3 0.6 L0.6 9.3 L7 9.3 L5.6 15.4 L14.6 6.6 L7.9 6.6 Z" fill="#f7c548" stroke="#1a1408" stroke-width="1" stroke-linejoin="round"/></g><g transform="translate(988.00 1148.14) scale(0.7500)"><path d="M9.3 0.6 L0.6 9.3 L7 9.3 L5.6 15.4 L14.6 6.6 L7.9 6.6 Z" fill="#f7c548" stroke="#1a1408" stroke-width="1" stroke-linejoin="round"/></g><g transform="translate(1029.80 1148.14) scale(0.7500)"><path d="M9.3 0.6 L0.6 9.3 L7 9.3 L5.6 15.4 L14.6 6.6 L7.9 6.6 Z" fill="#f7c548" stroke="#1a1408" stroke-width="1" stroke-linejoin="round"/></g><g transform="translate(1072.10 1148.14) scale(0.7500)"><path d="M9.3 0.6 L0.6 9.3 L7 9.3 L5.6 15.4 L14.6 6.6 L7.9 6.6 Z" fill="#f7c548" stroke="#1a1408" stroke-width="1" stroke-linejoin="round"/></g><g transform="translate(1114.00 1148.14) scale(0.7500)"><path d="M9.3 0.6 L0.6 9.3 L7 9.3 L5.6 15.4 L14.6 6.6 L7.9 6.6 Z" fill="#f7c548" stroke="#1a1408" stroke-width="1" stroke-linejoin="round"/></g><g transform="translate(1155.90 1148.14) scale(0.7500)"><path d="M9.3 0.6 L0.6 9.3 L7 9.3 L5.6 15.4 L14.6 6.6 L7.9 6.6 Z" fill="#f7c548" stroke="#1a1408" stroke-width="1" stroke-linejoin="round"/></g><g transform="translate(1196.90 1148.14) scale(0.7500)"><path d="M9.3 0.6 L0.6 9.3 L7 9.3 L5.6 15.4 L14.6 6.6 L7.9 6.6 Z" fill="#f7c548" stroke="#1a1408" stroke-width="1" stroke-linejoin="round"/></g><g transform="translate(1239.10 1148.14) scale(0.7500)"><path d="M9.3 0.6 L0.6 9.3 L7 9.3 L5.6 15.4 L14.6 6.6 L7.9 6.6 Z" fill="#f7c548" stroke="#1a1408" stroke-width="1" stroke-linejoin="round"/></g><g transform="translate(1281.00 1148.14) scale(0.7500)"><path d="M9.3 0.6 L0.6 9.3 L7 9.3 L5.6 15.4 L14.6 6.6 L7.9 6.6 Z" fill="#f7c548" stroke="#1a1408" stroke-width="1" stroke-linejoin="round"/></g><g transform="translate(1320.80 1148.14) scale(0.7500)"><path d="M9.3 0.6 L0.6 9.3 L7 9.3 L5.6 15.4 L14.6 6.6 L7.9 6.6 Z" fill="#f7c548" stroke="#1a1408" stroke-width="1" stroke-linejoin="round"/></g><g transform="translate(1358.20 1148.14) scale(0.7500)"><path d="M9.3 0.6 L0.6 9.3 L7 9.3 L5.6 15.4 L14.6 6.6 L7.9 6.6 Z" fill="#f7c548" stroke="#1a1408" stroke-width="1" stroke-linejoin="round"/></g><g transform="translate(1397.50 1148.14) scale(0.7500)"><path d="M9.3 0.6 L0.6 9.3 L7 9.3 L5.6 15.4 L14.6 6.6 L7.9 6.6 Z" fill="#f7c548" stroke="#1a1408" stroke-width="1" stroke-linejoin="round"/></g><g transform="translate(1437.00 1148.14) scale(0.7500)"><path d="M9.3 0.6 L0.6 9.3 L7 9.3 L5.6 15.4 L14.6 6.6 L7.9 6.6 Z" fill="#f7c548" stroke="#1a1408" stroke-width="1" stroke-linejoin="round"/></g></svg><div class="a" style="left:1558.40px;top:864.00px;width:107.90px;height:402.60px;border:1px solid #ededee;border-radius:4px;background:#fff"></div><div class="t" style="left:1572.60px;top:883.45px;font-size:20.5px;color:#333;font-weight:normal;">Legend</div><svg style="left:0;top:0" width="1700" height="1000" viewBox="0 0 1700 1000"><g transform="translate(1573.80 923.00) scale(1.0000)"><rect x="0.6" y="0.6" width="14.8" height="14.8" fill="#1fb51f" stroke="#0b3a0b" stroke-width="1.2"/><path d="M3.6 8.3 L6.3 10.9 L12.2 4.2" fill="none" stroke="#eaffea" stroke-width="1.9" stroke-linecap="round" stroke-linejoin="round"/></g><g transform="translate(1573.80 943.60) scale(1.0000)"><path d="M1.2 3.7 L3.7 1.2 L8 5.5 L12.3 1.2 L14.8 3.7 L10.5 8 L14.8 12.3 L12.3 14.8 L8 10.5 L3.7 14.8 L1.2 12.3 L5.5 8 Z" fill="#e04b2d" stroke="#2e0b06" stroke-width="1.15" stroke-linejoin="round"/></g><g transform="translate(1573.80 964.00) scale(1.0000)"><path d="M9.3 0.6 L0.6 9.3 L7 9.3 L5.6 15.4 L14.6 6.6 L7.9 6.6 Z" fill="#f7c548" stroke="#1a1408" stroke-width="1" stroke-linejoin="round"/></g></svg><div class="t" style="left:1595.30px;top:924.10px;font-size:14.3px;color:#333;font-weight:normal;">= yes</div><div class="t" style="left:1595.30px;top:944.60px;font-size:14.3px;color:#333;font-weight:normal;">= no</div><div class="t" style="left:1595.30px;top:965.10px;font-size:14.3px;color:#333;font-weight:normal;">= not set</div><div class="t" style="left:1572.80px;top:1001.50px;font-size:14.3px;color:#333;font-weight:normal;">C01 to C14</div><div class="t" style="left:1572.80px;top:1022.20px;font-size:14.3px;color:#333;font-weight:normal;">are the</div><div class="t" style="left:1572.80px;top:1042.90px;font-size:14.3px;color:#333;font-weight:normal;">criteria from</div><div class="t" style="left:1572.80px;top:1063.60px;font-size:14.3px;color:#333;font-weight:normal;">the BPM</div><div class="t" style="left:1572.80px;top:1084.30px;font-size:14.3px;color:#333;font-weight:normal;">maturity</div><div class="t" style="left:1572.80px;top:1105.00px;font-size:14.3px;color:#333;font-weight:normal;">model.</div><div class="t" style="left:1572.80px;top:1125.70px;font-size:14.3px;color:#333;font-weight:normal;">More info</div><div class="t" style="left:1572.80px;top:1146.40px;font-size:14.3px;color:#333;font-weight:normal;">on the</div><div class="t" style="left:1572.80px;top:1167.10px;font-size:14.3px;color:#333;font-weight:normal;">maturity</div><div class="t" style="left:1572.80px;top:1187.80px;font-size:14.3px;color:#333;font-weight:normal;">model can</div><div class="t" style="left:1572.80px;top:1208.50px;font-size:14.3px;color:#333;font-weight:normal;">be found</div><div class="t" style="left:1572.80px;top:1229.20px;font-size:14.3px;color:#333;font-weight:normal;"><u>here</u></div>
</div>
<div class="a" style="left:0;top:0.8px;width:2321.6px;height:1611.2px;border:1.7px solid #c6c8cb;border-radius:16.5px;pointer-events:none"></div>
</body></html>
